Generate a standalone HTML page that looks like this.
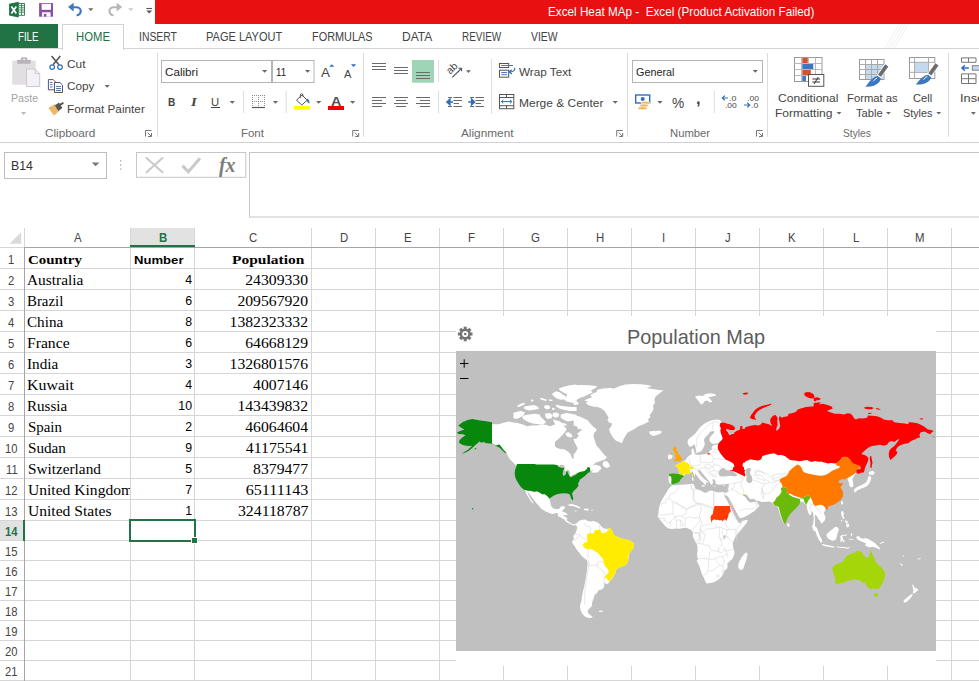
<!DOCTYPE html>
<html>
<head>
<meta charset="utf-8">
<title>Excel Heat MAp</title>
<style>
html,body{margin:0;padding:0;}
body{width:979px;height:681px;overflow:hidden;background:#fff;position:relative;font-family:"Liberation Sans",sans-serif;color:#444;}
.abs{position:absolute;}
.t{position:absolute;white-space:nowrap;line-height:1;}
.vline{position:absolute;width:1px;background:#d6d6d6;}
.hline{position:absolute;height:1px;background:#d6d6d6;}
</style>
</head>
<body>
<div class="abs" style="left:155px;top:0;width:824px;height:24px;background:#e81010;"></div>
<div class="t" style="left:547.50px;top:7.13px;font-size:11.9px;color:#fff;transform:scaleX(0.9852);transform-origin:left top;">Excel Heat MAp -  Excel (Product Activation Failed)</div>
<div class="abs" style="left:0;top:24px;width:58px;height:24.5px;background:#217346;"></div>
<div class="abs" style="left:0;top:48px;width:979px;height:1px;background:#d4d4d4;"></div>
<div class="abs" style="left:62px;top:24px;width:60px;height:25px;background:#fff;border:1px solid #d2d2d2;border-bottom:none;"></div>
<div class="t" style="left:18.40px;top:31.37px;font-size:12.2px;color:#fff;transform:scaleX(0.7957);transform-origin:left top;">FILE</div>
<div class="t" style="left:75.70px;top:31.37px;font-size:12.2px;color:#217346;transform:scaleX(0.9289);transform-origin:left top;">HOME</div>
<div class="t" style="left:138.80px;top:31.37px;font-size:12.2px;color:#444;transform:scaleX(0.8536);transform-origin:left top;">INSERT</div>
<div class="t" style="left:206.00px;top:31.37px;font-size:12.2px;color:#444;transform:scaleX(0.9052);transform-origin:left top;">PAGE LAYOUT</div>
<div class="t" style="left:312.30px;top:31.37px;font-size:12.2px;color:#444;transform:scaleX(0.8940);transform-origin:left top;">FORMULAS</div>
<div class="t" style="left:402.40px;top:31.37px;font-size:12.2px;color:#444;transform:scaleX(0.9861);transform-origin:left top;">DATA</div>
<div class="t" style="left:462.40px;top:31.37px;font-size:12.2px;color:#444;transform:scaleX(0.8166);transform-origin:left top;">REVIEW</div>
<div class="t" style="left:531.40px;top:31.37px;font-size:12.2px;color:#444;transform:scaleX(0.8531);transform-origin:left top;">VIEW</div>
<svg class="abs" style="left:880px;top:24px" width="30" height="24" viewBox="880 24 30 24"><path d="M899.500 24 L885.500 48 M902.500 24 L888.500 48 M905.500 24 L891.500 48 M908.500 24 L894.500 48" stroke="#ececec" stroke-width="0.800" fill="none"/></svg>
<div class="abs" style="left:0;top:141.5px;width:979px;height:1px;background:#d0d0d0;"></div>
<svg class="abs" style="left:0;top:0" width="979" height="145" viewBox="0 0 979 145">
<path d="M18 3.5 H24.5 V15.300 H18 Z" fill="#fff" stroke="#217346" stroke-width="0.9"/>
<path d="M19 5.600h5M19 7.800h5M19 10h5M19 12.200h5M21.600 4v11" stroke="#217346" stroke-width="0.8" fill="none"/>
<path d="M9.100 3.700 L18.700 1.800 L18.700 17.600 L9.100 15.500 Z" fill="#217346"/>
<path d="M11.400 6.500 L16.300 13.500 M16.300 6.500 L11.400 13.500" stroke="#fff" stroke-width="1.700" fill="none"/>
<rect x="39.100" y="3.100" width="13.900" height="13.600" fill="#8b4fa8"/>
<rect x="41.600" y="3.900" width="9.400" height="5.900" fill="#fff"/>
<rect x="42" y="12.300" width="8.600" height="4.400" fill="#fff"/>
<rect x="43.800" y="13.800" width="2.600" height="2.900" fill="#8b4fa8"/>
<path d="M72.500 7.200 H76.300 A4.300 4 0 0 1 76.600 15.200" fill="none" stroke="#3b78c0" stroke-width="2.100"/>
<path d="M68 7.100 L73.600 2.700 L73.600 11.400 Z" fill="#3b78c0"/>
<path d="M88.2 8.2 h5.2 l-2.6 2.7 z" fill="#666"/>
<path d="M117.700 7.200 H113.900 A4.300 4 0 0 0 113.600 15.200" fill="none" stroke="#b7b7b7" stroke-width="2.100"/>
<path d="M122.200 7.100 L116.600 2.700 L116.600 11.400 Z" fill="#b7b7b7"/>
<path d="M128.2 8.2 h5.2 l-2.6 2.7 z" fill="#c9c9c9"/>
<path d="M146.400 8.500h5.700" stroke="#555" stroke-width="1.100"/>
<path d="M146.3 10.6 h5.9 l-2.95 3 z" fill="#555"/>
<rect x="12.200" y="60.500" width="23.500" height="24.300" rx="1.200" fill="#e2dfe2"/>
<rect x="17.200" y="59.800" width="13.500" height="4" rx="0.800" fill="#b7b4b7"/>
<path d="M21 60 v-1.400 a1.400 1.400 0 0 1 1.400 -1.400 h3.400 a1.400 1.400 0 0 1 1.400 1.400 v1.400 z" fill="#b7b4b7"/>
<circle cx="24.100" cy="59.300" r="0.900" fill="#fff"/>
<path d="M26.500 69 h8.700 l4.500 4.500 v13 h-13.200 z" fill="#f4f1f6" stroke="#c8c5cb" stroke-width="0.900"/>
<path d="M35.200 69 v4.500 h4.500" fill="none" stroke="#c8c5cb" stroke-width="0.900"/>
<path d="M21.1 112 h5 l-2.5 3 z" fill="#b9b9b9"/>
<path d="M51.600 56 L58.900 64.700 M60.300 56 L53 64.700" stroke="#555" stroke-width="1.600" fill="none"/>
<circle cx="52.200" cy="67.100" r="2.300" stroke="#2e6fbd" stroke-width="1.200" fill="none"/><circle cx="60" cy="67.100" r="2.300" stroke="#2e6fbd" stroke-width="1.200" fill="none"/>
<path d="M48.400 79.600 h4.800 l2.200 2.200 v8 h-7 z" fill="#fff" stroke="#555" stroke-width="1"/>
<path d="M50 82.500h2.600M50 84.700h2.600M50 87h2.600" stroke="#2e6fbd" stroke-width="0.900"/>
<path d="M54.500 82.500 h5.400 l2.600 2.600 v7.400 h-8 z" fill="#fff" stroke="#555" stroke-width="1"/>
<path d="M56 86.500h5M56 88.500h5M56 90.500h5" stroke="#2e6fbd" stroke-width="0.900"/>
<path d="M104.6 85 h5.2 l-2.6 2.7 z" fill="#666"/>
<path d="M48.400 107.900 L54.900 103.900 L59.400 110.900 L53.900 115.400 Z" fill="#e8b96a"/>
<path d="M54.900 105.400 L58.900 102.400 L62.400 107.900 L58.400 110.900 Z" fill="#555"/>
<path d="M59.400 103.900 L62.900 101.900 L63.900 103.400 L60.700 105.700 Z" fill="#555"/>
<path d="M145.5 136.5 v-6 h6" fill="none" stroke="#777" stroke-width="1"/><path d="M147.6 132.6 l3.400 3.400 M151.5 133 v3.500 h-3.500" fill="none" stroke="#777" stroke-width="1"/>
<path d="M352.7 136.5 v-6 h6" fill="none" stroke="#777" stroke-width="1"/><path d="M354.8 132.6 l3.400 3.400 M358.7 133 v3.500 h-3.500" fill="none" stroke="#777" stroke-width="1"/>
<path d="M616.7 136.5 v-6 h6" fill="none" stroke="#777" stroke-width="1"/><path d="M618.8000000000001 132.6 l3.400 3.400 M622.7 133 v3.500 h-3.500" fill="none" stroke="#777" stroke-width="1"/>
<path d="M756.5 136.5 v-6 h6" fill="none" stroke="#777" stroke-width="1"/><path d="M758.6 132.6 l3.400 3.400 M762.5 133 v3.500 h-3.500" fill="none" stroke="#777" stroke-width="1"/>
<rect x="161.500" y="60.500" width="110" height="22" fill="#fff" stroke="#b4b4b4"/>
<rect x="272.500" y="60.500" width="41.500" height="22" fill="#fff" stroke="#b4b4b4"/>
<path d="M262 70 h5.2 l-2.6 2.7 z" fill="#666"/>
<path d="M305 70 h5.2 l-2.6 2.7 z" fill="#666"/>
<path d="M329.300 66.800 l2.450 -2.600 l2.450 2.600 z" fill="#2e6fbd"/>
<path d="M350.900 64.300 l2.600 2.600 l2.600 -2.600 z" fill="#2e6fbd"/>
<path d="M229.7 101 h5.2 l-2.6 2.7 z" fill="#666"/>
<path d="M243.600 91 v22 M286.200 91 v22" stroke="#dcdcdc"/>
<g fill="#8c8c8c"><rect x="252" y="95" width="1" height="1"/><rect x="254" y="95" width="1" height="1"/><rect x="256" y="95" width="1" height="1"/><rect x="258" y="95" width="1" height="1"/><rect x="260" y="95" width="1" height="1"/><rect x="262" y="95" width="1" height="1"/><rect x="264" y="95" width="1" height="1"/><rect x="252" y="101" width="1" height="1"/><rect x="254" y="101" width="1" height="1"/><rect x="256" y="101" width="1" height="1"/><rect x="258" y="101" width="1" height="1"/><rect x="260" y="101" width="1" height="1"/><rect x="262" y="101" width="1" height="1"/><rect x="264" y="101" width="1" height="1"/><rect x="252" y="95" width="1" height="1"/><rect x="252" y="97" width="1" height="1"/><rect x="252" y="99" width="1" height="1"/><rect x="252" y="101" width="1" height="1"/><rect x="252" y="103" width="1" height="1"/><rect x="252" y="105" width="1" height="1"/><rect x="258" y="95" width="1" height="1"/><rect x="258" y="97" width="1" height="1"/><rect x="258" y="99" width="1" height="1"/><rect x="258" y="101" width="1" height="1"/><rect x="258" y="103" width="1" height="1"/><rect x="258" y="105" width="1" height="1"/><rect x="264" y="95" width="1" height="1"/><rect x="264" y="97" width="1" height="1"/><rect x="264" y="99" width="1" height="1"/><rect x="264" y="101" width="1" height="1"/><rect x="264" y="103" width="1" height="1"/><rect x="264" y="105" width="1" height="1"/></g>
<path d="M252 107.500 h13" stroke="#555" stroke-width="1.200"/>
<path d="M272.9 101 h5.2 l-2.6 2.7 z" fill="#666"/>
<rect x="293.900" y="106" width="16.100" height="3.700" fill="#ffff00"/>
<path d="M296.500 100.200 L302 95 L307.200 100.200 L301.800 105 Z" fill="#fff" stroke="#555" stroke-width="1"/>
<path d="M300.300 98 v-3 a1.300 1.300 0 0 1 2.600 0 v1.600" fill="none" stroke="#555" stroke-width="0.900"/>
<path d="M307 98.500 q3 1.500 2.300 5.300 q-2.300 -1.300 -2.800 -4 z" fill="#2e6fbd"/>
<path d="M316.1 101 h5.2 l-2.6 2.7 z" fill="#666"/>
<rect x="328" y="106" width="16" height="4" fill="#f00000"/>
<path d="M350 101 h5.2 l-2.6 2.7 z" fill="#666"/>
<path d="M372 63.500 h14 M372 66.500 h14 M372 69.500 h14" stroke="#6a6a6a"/>
<path d="M394 67.500 h14 M394 70.500 h14 M394 73.500 h14" stroke="#6a6a6a"/>
<rect x="412" y="60" width="22" height="22.700" fill="#9fd5b7"/>
<path d="M416 72.500 h14 M416 75.500 h14 M416 78.500 h14" stroke="#6a6a6a"/>
<path d="M438.600 60 v22 M438.600 91 v22 M491.600 59 v54.700" stroke="#dcdcdc"/>
<path d="M452.300 77.300 L461.400 68.500 M461.600 68.300 h-3 M461.600 68.300 v3" stroke="#555" stroke-width="1.100" fill="none"/>
<g transform="translate(451.700 69) rotate(-45)"><text x="-5.200" y="3" font-family="Liberation Sans" font-size="10.300" fill="#444">ab</text></g>
<path d="M466 70.2 h4.9 l-2.45 2.7 z" fill="#666"/>
<rect x="499.500" y="63.500" width="9.200" height="4" fill="#fff" stroke="#555"/>
<rect x="499.500" y="70.200" width="9.200" height="7" fill="#fff" stroke="#555"/>
<path d="M501.200 65.500 h11.800 M501.200 72.500 h5.800 M501.200 74.700 h5.800" stroke="#2e6fbd" stroke-width="0.900" fill="none"/>
<path d="M514.800 67.700 q0.400 4.200 -5.400 4.300 M511.700 69.800 l-2.700 2.200 l2.900 2" stroke="#2e6fbd" stroke-width="1.100" fill="none"/>
<path d="M372 97.500 h14 M372 100.500 h10 M372 103.500 h14 M372 106.500 h10" stroke="#6a6a6a"/>
<path d="M394 97.500 h14 M396 100.500 h10 M394 103.500 h14 M396 106.500 h10" stroke="#6a6a6a"/>
<path d="M416 97.500 h14 M420 100.500 h10 M416 103.500 h14 M420 106.500 h10" stroke="#6a6a6a"/>
<path d="M448 97.500 h4 M453.500 97.500 h8.500 M453.500 100.500 h8.500 M453.500 103.500 h5.500 M448 106.500 h4 M453.500 106.500 h8.500" stroke="#6a6a6a"/>
<path d="M447 102 h6 M450 99 l-3.200 3 l3.200 3 z" stroke="#2e6fbd" stroke-width="1.300" fill="#2e6fbd"/>
<path d="M470 97.500 h4 M475.500 97.500 h8.500 M475.500 100.500 h8.500 M475.500 103.500 h5.500 M470 106.500 h4 M475.500 106.500 h8.500" stroke="#6a6a6a"/>
<path d="M468.200 102 h5.500 M471.500 99 l3.200 3 l-3.200 3 z" stroke="#2e6fbd" stroke-width="1.300" fill="#2e6fbd"/>
<rect x="499.500" y="94.500" width="14.300" height="14.200" fill="#fff" stroke="#555"/>
<path d="M499.500 97.500 h14.300 M499.500 105.700 h14.300 M506.500 94.500 v3 M506.500 105.700 v3" stroke="#555"/>
<path d="M501.500 101.600 h10.300 M503.300 99.900 l-1.900 1.700 l1.900 1.700 M510 99.900 l1.900 1.700 l-1.900 1.700" stroke="#2e6fbd" stroke-width="1" fill="none"/>
<path d="M612.6 101 h5.2 l-2.6 2.7 z" fill="#666"/>
<rect x="632.500" y="60.500" width="130" height="22" fill="#fff" stroke="#b4b4b4"/>
<path d="M752.7 70 h5.2 l-2.6 2.7 z" fill="#666"/>
<rect x="635.700" y="95" width="14" height="8" fill="#fff" stroke="#2e6fbd" stroke-width="1.400"/>
<circle cx="642.700" cy="99" r="2" fill="#2e6fbd"/>
<ellipse cx="645.500" cy="102.800" rx="4.600" ry="1.600" fill="#eab765" stroke="#fff" stroke-width="0.600"/>
<ellipse cx="644" cy="105.500" rx="4.600" ry="1.600" fill="#eab765" stroke="#fff" stroke-width="0.600"/>
<ellipse cx="642.500" cy="108.200" rx="4.600" ry="1.600" fill="#eab765" stroke="#fff" stroke-width="0.600"/>
<path d="M657.3 101 h5.2 l-2.6 2.7 z" fill="#666"/>
<path d="M714.300 91 v22" stroke="#dcdcdc"/>
<path d="M722.300 98 h5.700 M724.800 95.600 l-2.500 2.400 l2.500 2.400" stroke="#2e6fbd" stroke-width="1.200" fill="none"/>
<path d="M744 105 h5.700 M747.200 102.600 l2.500 2.400 l-2.500 2.400" stroke="#2e6fbd" stroke-width="1.200" fill="none"/>
<rect x="794.500" y="57.500" width="27.500" height="24" fill="#fff" stroke="#9a9a9a"/>
<path d="M794.500 63.500 h27.500 M794.500 69.500 h27.500 M794.500 75.500 h27.500 M801.500 57.500 v24 M808.500 57.500 v24 M815.500 57.500 v24" stroke="#b9b9b9" fill="none"/>
<rect x="802.300" y="58" width="5.500" height="5" fill="#d9502f"/><rect x="802.300" y="64" width="11" height="5" fill="#3b78c0"/><rect x="802.300" y="70" width="8.500" height="5" fill="#d9502f"/><rect x="802.300" y="76" width="3.700" height="5" fill="#3b78c0"/>
<rect x="808.500" y="74.500" width="15.300" height="11.800" fill="#fff" stroke="#555"/>
<path d="M812.500 79 h7.500 M812.500 82 h7.500 M818.300 77 l-4.200 7" stroke="#333" stroke-width="1" fill="none"/>
<path d="M836.6 112 h4.9 l-2.45 2.6 z" fill="#666"/>
<rect x="859.500" y="59.500" width="24.500" height="20" fill="#fff" stroke="#9a9a9a"/>
<rect x="866" y="65" width="17.500" height="14" fill="#c5d9ee"/>
<path d="M859.500 64.500 h24.500 M859.500 69.500 h24.500 M859.500 74.500 h24.500 M865.500 59.500 v20 M871.500 59.500 v20 M877.500 59.500 v20" stroke="#a9a9a9" fill="none"/>
<path d="M886.800 65.300 L879 76.400" stroke="#fff" stroke-width="5.200" fill="none"/>
<path d="M886.800 65.300 L879.300 76" stroke="#6d6d6d" stroke-width="3.800" fill="none"/>
<path d="M876.800 74.300 l4.600 3.300" stroke="#fff" stroke-width="0.900" fill="none"/>
<path d="M877.300 76.100 q-5.500 1.200 -11.800 10.700 q9 0.300 13.500 -4.500 q2 -2.500 1.800 -4 z" fill="#3b78c0"/>
<path d="M873.300 81.300 q1.500 -2.600 3.800 -3.200" stroke="#fff" stroke-width="0.900" fill="none"/>
<path d="M886 112 h4.9 l-2.45 2.6 z" fill="#666"/>
<rect x="909.500" y="57.500" width="25.300" height="21" fill="#fff" stroke="#9a9a9a"/>
<path d="M909.500 62.300 h25.300 M909.500 72.300 h25.300 M914.600 57.500 v21 M928.500 57.500 v21" stroke="#a9a9a9" fill="none"/>
<rect x="914.600" y="62.300" width="13.900" height="10" fill="#c5d9ee" stroke="#a9a9a9" stroke-width="0.600"/>
<path d="M937 64.300 L929.300 75" stroke="#fff" stroke-width="5.200" fill="none"/>
<path d="M937 64.300 L929.600 74.600" stroke="#6d6d6d" stroke-width="3.800" fill="none"/>
<path d="M927 72.900 l4.600 3.300" stroke="#fff" stroke-width="0.900" fill="none"/>
<path d="M927.600 74.700 q-5.500 1.200 -11.800 9.900 q9 0.300 13.500 -3.900 q2 -2.500 1.800 -3.800 z" fill="#3b78c0"/>
<path d="M923.600 79.700 q1.500 -2.600 3.800 -3.200" stroke="#fff" stroke-width="0.900" fill="none"/>
<path d="M936.3 112 h4.9 l-2.45 2.6 z" fill="#666"/>
<path d="M961.500 57.900 h14.500 v4.400 h-14.500 z M968.500 57.900 v4.400" fill="#fff" stroke="#777"/>
<path d="M961.500 73.900 h14.500 v9.600 h-14.500 z M968.500 73.900 v9.600 M961.500 78.700 h14.500" fill="#fff" stroke="#777"/>
<rect x="972.300" y="65.700" width="8" height="4.500" fill="#c5d9ee" stroke="#777" stroke-width="0.900"/>
<path d="M962 68 h6.800 M964.800 65.300 l-2.800 2.700 l2.800 2.700" stroke="#2e6fbd" stroke-width="1.500" fill="none"/>
<path d="M970.9 112 h4.9 l-2.45 2.8 z" fill="#666"/>
</svg>
<div class="abs" style="left:156.5px;top:53px;height:84px;width:1px;background:#dcdcdc;"></div>
<div class="abs" style="left:363.0px;top:53px;height:84px;width:1px;background:#dcdcdc;"></div>
<div class="abs" style="left:627.0px;top:53px;height:84px;width:1px;background:#dcdcdc;"></div>
<div class="abs" style="left:767.0px;top:53px;height:84px;width:1px;background:#dcdcdc;"></div>
<div class="abs" style="left:947.8px;top:53px;height:84px;width:1px;background:#dcdcdc;"></div>
<div class="t" style="left:10.80px;top:92.57px;font-size:11.5px;color:#a3a3a3;transform:scaleX(0.9249);transform-origin:left top;">Paste</div>
<div class="t" style="left:67.30px;top:58.67px;font-size:11.5px;color:#444;transform:scaleX(1.0338);transform-origin:left top;">Cut</div>
<div class="t" style="left:67.30px;top:81.47px;font-size:11.5px;color:#444;transform:scaleX(1.0243);transform-origin:left top;">Copy</div>
<div class="t" style="left:67.30px;top:104.37px;font-size:11.5px;color:#444;transform:scaleX(1.0229);transform-origin:left top;">Format Painter</div>
<div class="t" style="left:44.50px;top:127.57px;font-size:11.5px;color:#6a6a6a;transform:scaleX(1.0218);transform-origin:left top;">Clipboard</div>
<div class="t" style="left:164.80px;top:66.77px;font-size:11.5px;color:#1e1e1e;transform:scaleX(1.0125);transform-origin:left top;">Calibri</div>
<div class="t" style="left:275.60px;top:66.77px;font-size:11.5px;color:#1e1e1e;transform:scaleX(0.8460);transform-origin:left top;">11</div>
<div class="t" style="left:321.40px;top:66.10px;font-size:13.7px;color:#444;transform:scaleX(0.9849);transform-origin:left top;">A</div>
<div class="t" style="left:344.30px;top:68.56px;font-size:10.8px;color:#444;transform:scaleX(1.0272);transform-origin:left top;">A</div>
<div class="t" style="left:167.70px;top:96.48px;font-size:11.6px;color:#444;font-weight:bold;transform:scaleX(0.8714);transform-origin:left top;">B</div>
<div class="t" style="left:190.50px;top:95.91px;font-size:12.4px;color:#444;font-family:'Liberation Serif',serif;font-weight:bold;font-style:italic;transform:scaleX(1.1813);transform-origin:left top;">I</div>
<div class="t" style="left:211.40px;top:96.48px;font-size:11.6px;color:#444;transform:scaleX(0.9669);transform-origin:left top;">U</div>
<div class="abs" style="left:211px;top:107px;width:9px;height:1px;background:#444;"></div>
<div class="t" style="left:331.20px;top:94.89px;font-size:13.6px;color:#505050;font-weight:bold;transform:scaleX(1.0589);transform-origin:left top;">A</div>
<div class="t" style="left:240.80px;top:127.57px;font-size:11.5px;color:#6a6a6a;transform:scaleX(0.9951);transform-origin:left top;">Font</div>
<div class="t" style="left:518.60px;top:66.77px;font-size:11.5px;color:#444;transform:scaleX(1.0186);transform-origin:left top;">Wrap Text</div>
<div class="t" style="left:518.60px;top:97.87px;font-size:11.5px;color:#444;transform:scaleX(1.0409);transform-origin:left top;">Merge &amp; Center</div>
<div class="t" style="left:461.20px;top:127.57px;font-size:11.5px;color:#6a6a6a;transform:scaleX(1.0266);transform-origin:left top;">Alignment</div>
<div class="t" style="left:635.90px;top:66.77px;font-size:11.5px;color:#1e1e1e;transform:scaleX(0.9386);transform-origin:left top;">General</div>
<div class="t" style="left:671.50px;top:96.05px;font-size:14px;color:#444;transform:scaleX(0.9801);transform-origin:left top;">%</div>
<div class="t" style="left:696.00px;top:89.91px;font-size:17px;color:#444;font-weight:bold;transform:scaleX(0.9740);transform-origin:left top;">,</div>
<div class="t" style="left:729.00px;top:95.27px;font-size:7.6px;color:#444;transform:scaleX(1.1675);transform-origin:left top;">.0</div>
<div class="t" style="left:724.60px;top:102.07px;font-size:7.6px;color:#444;transform:scaleX(1.1169);transform-origin:left top;">.00</div>
<div class="t" style="left:746.70px;top:95.27px;font-size:7.6px;color:#444;transform:scaleX(1.1263);transform-origin:left top;">.00</div>
<div class="t" style="left:751.40px;top:102.07px;font-size:7.6px;color:#444;transform:scaleX(1.1360);transform-origin:left top;">.0</div>
<div class="t" style="left:669.80px;top:127.57px;font-size:11.5px;color:#6a6a6a;transform:scaleX(0.9804);transform-origin:left top;">Number</div>
<div class="t" style="left:777.70px;top:92.97px;font-size:11.5px;color:#444;transform:scaleX(1.0514);transform-origin:left top;">Conditional</div>
<div class="t" style="left:774.80px;top:108.47px;font-size:11.5px;color:#444;transform:scaleX(1.0461);transform-origin:left top;">Formatting</div>
<div class="t" style="left:846.70px;top:92.97px;font-size:11.5px;color:#444;transform:scaleX(0.9795);transform-origin:left top;">Format as</div>
<div class="t" style="left:855.70px;top:108.47px;font-size:11.5px;color:#444;transform:scaleX(0.9675);transform-origin:left top;">Table</div>
<div class="t" style="left:912.50px;top:92.97px;font-size:11.5px;color:#444;transform:scaleX(0.9691);transform-origin:left top;">Cell</div>
<div class="t" style="left:903.40px;top:108.47px;font-size:11.5px;color:#444;transform:scaleX(0.9356);transform-origin:left top;">Styles</div>
<div class="t" style="left:843.40px;top:127.57px;font-size:11.5px;color:#6a6a6a;transform:scaleX(0.8877);transform-origin:left top;">Styles</div>
<div class="t" style="left:959.60px;top:92.97px;font-size:11.5px;color:#444;transform:scaleX(1.1091);transform-origin:left top;">Insert</div>
<div class="abs" style="left:4px;top:152px;width:101px;height:24.5px;border:1px solid #bdbdbd;background:#fff;"></div>
<div class="t" style="left:11.40px;top:160.24px;font-size:12px;color:#333;transform:scaleX(1.0210);transform-origin:left top;">B14</div>
<svg class="abs" style="left:0;top:145px" width="979" height="80" viewBox="0 145 979 80">
<path d="M91.800 162.500 h7.600 l-3.800 3.800 z" fill="#777"/>
<rect x="120" y="160.200" width="1.300" height="1.300" fill="#a5a5a5"/><rect x="120" y="164.300" width="1.300" height="1.300" fill="#a5a5a5"/><rect x="120" y="168.400" width="1.300" height="1.300" fill="#a5a5a5"/>
<rect x="136.500" y="152.500" width="109.300" height="24.800" fill="#fff" stroke="#c6c6c6"/>
<path d="M146.500 158 L162.500 172.300 M162.500 158 L146.500 172.300" stroke="#c9c9c9" stroke-width="2" fill="none" stroke-linecap="round"/>
<path d="M182.500 165.600 L188.400 171.800 L200 158.300" stroke="#c9c9c9" stroke-width="3" fill="none"/>
<path d="M249.500 217.300 v-64.800 h730 M249.500 217 h730" stroke="#c6c6c6" fill="none"/>
</svg>
<div class="t" style="left:218.50px;top:154.71px;font-size:21px;color:#7c7c7c;font-family:'Liberation Serif',serif;font-weight:bold;font-style:italic;transform:scaleX(0.9432);transform-origin:left top;">fx</div>
<div class="abs" style="left:131px;top:228px;width:63px;height:18px;background:#e2e2e2;"></div>
<div class="abs" style="left:130px;top:245px;width:65px;height:2px;background:#217346;"></div>
<svg class="abs" style="left:0;top:228px" width="24" height="20"><path d="M21.2 4.2 v11.500 h-11.700 z" fill="#dadada"/></svg>
<div class="hline" style="left:0;top:268px;width:979px;"></div>
<div class="hline" style="left:0;top:289px;width:979px;"></div>
<div class="hline" style="left:0;top:310px;width:979px;"></div>
<div class="hline" style="left:0;top:331px;width:979px;"></div>
<div class="hline" style="left:0;top:352px;width:979px;"></div>
<div class="hline" style="left:0;top:373px;width:979px;"></div>
<div class="hline" style="left:0;top:394px;width:979px;"></div>
<div class="hline" style="left:0;top:415px;width:979px;"></div>
<div class="hline" style="left:0;top:436px;width:979px;"></div>
<div class="hline" style="left:0;top:457px;width:979px;"></div>
<div class="hline" style="left:0;top:478px;width:979px;"></div>
<div class="hline" style="left:0;top:499px;width:979px;"></div>
<div class="hline" style="left:0;top:520px;width:979px;"></div>
<div class="hline" style="left:0;top:540px;width:979px;"></div>
<div class="hline" style="left:0;top:560px;width:979px;"></div>
<div class="hline" style="left:0;top:580px;width:979px;"></div>
<div class="hline" style="left:0;top:600px;width:979px;"></div>
<div class="hline" style="left:0;top:620px;width:979px;"></div>
<div class="hline" style="left:0;top:640px;width:979px;"></div>
<div class="hline" style="left:0;top:660px;width:979px;"></div>
<div class="hline" style="left:0;top:680px;width:979px;"></div>
<div class="vline" style="left:24px;top:228px;height:453px;"></div>
<div class="vline" style="left:130px;top:228px;height:453px;"></div>
<div class="vline" style="left:194px;top:228px;height:453px;"></div>
<div class="vline" style="left:311px;top:228px;height:453px;"></div>
<div class="vline" style="left:375px;top:228px;height:453px;"></div>
<div class="vline" style="left:439px;top:228px;height:453px;"></div>
<div class="vline" style="left:503px;top:228px;height:453px;"></div>
<div class="vline" style="left:567px;top:228px;height:453px;"></div>
<div class="vline" style="left:631px;top:228px;height:453px;"></div>
<div class="vline" style="left:695px;top:228px;height:453px;"></div>
<div class="vline" style="left:759px;top:228px;height:453px;"></div>
<div class="vline" style="left:823px;top:228px;height:453px;"></div>
<div class="vline" style="left:887px;top:228px;height:453px;"></div>
<div class="vline" style="left:951px;top:228px;height:453px;"></div>
<div class="hline" style="left:0;top:247px;width:24px;background:#d6d6d6;"></div>
<div class="hline" style="left:24px;top:247px;width:955px;background:#a6a6a6;"></div>
<div class="vline" style="left:24px;top:247px;height:434px;background:#a6a6a6;"></div>
<div class="abs" style="left:130px;top:245px;width:65px;height:2px;background:#217346;"></div>
<div class="t" style="left:74.00px;top:232.20px;font-size:12.4px;color:#444;transform:scaleX(0.9200);transform-origin:left top;">A</div>
<div class="t" style="left:158.68px;top:232.20px;font-size:12.4px;color:#217346;font-weight:bold;transform:scaleX(0.9200);transform-origin:left top;">B</div>
<div class="t" style="left:249.18px;top:232.20px;font-size:12.4px;color:#444;transform:scaleX(0.9200);transform-origin:left top;">C</div>
<div class="t" style="left:339.68px;top:232.20px;font-size:12.4px;color:#444;transform:scaleX(0.9200);transform-origin:left top;">D</div>
<div class="t" style="left:404.00px;top:232.20px;font-size:12.4px;color:#444;transform:scaleX(0.9200);transform-origin:left top;">E</div>
<div class="t" style="left:468.32px;top:232.20px;font-size:12.4px;color:#444;transform:scaleX(0.9200);transform-origin:left top;">F</div>
<div class="t" style="left:531.36px;top:232.20px;font-size:12.4px;color:#444;transform:scaleX(0.9200);transform-origin:left top;">G</div>
<div class="t" style="left:595.68px;top:232.20px;font-size:12.4px;color:#444;transform:scaleX(0.9200);transform-origin:left top;">H</div>
<div class="t" style="left:662.22px;top:232.20px;font-size:12.4px;color:#444;transform:scaleX(0.9200);transform-origin:left top;">I</div>
<div class="t" style="left:724.95px;top:232.20px;font-size:12.4px;color:#444;transform:scaleX(0.9200);transform-origin:left top;">J</div>
<div class="t" style="left:788.00px;top:232.20px;font-size:12.4px;color:#444;transform:scaleX(0.9200);transform-origin:left top;">K</div>
<div class="t" style="left:852.63px;top:232.20px;font-size:12.4px;color:#444;transform:scaleX(0.9200);transform-origin:left top;">L</div>
<div class="t" style="left:915.05px;top:232.20px;font-size:12.4px;color:#444;transform:scaleX(0.9200);transform-origin:left top;">M</div>
<div class="t" style="left:979.68px;top:232.20px;font-size:12.4px;color:#444;transform:scaleX(0.9200);transform-origin:left top;">N</div>
<div class="t" style="left:8.48px;top:253.67px;font-size:12.2px;color:#444;transform:scaleX(0.9200);transform-origin:left top;">1</div>
<div class="t" style="left:8.48px;top:274.67px;font-size:12.2px;color:#444;transform:scaleX(0.9200);transform-origin:left top;">2</div>
<div class="t" style="left:8.48px;top:295.67px;font-size:12.2px;color:#444;transform:scaleX(0.9200);transform-origin:left top;">3</div>
<div class="t" style="left:8.48px;top:316.67px;font-size:12.2px;color:#444;transform:scaleX(0.9200);transform-origin:left top;">4</div>
<div class="t" style="left:8.48px;top:337.67px;font-size:12.2px;color:#444;transform:scaleX(0.9200);transform-origin:left top;">5</div>
<div class="t" style="left:8.48px;top:358.67px;font-size:12.2px;color:#444;transform:scaleX(0.9200);transform-origin:left top;">6</div>
<div class="t" style="left:8.48px;top:379.67px;font-size:12.2px;color:#444;transform:scaleX(0.9200);transform-origin:left top;">7</div>
<div class="t" style="left:8.48px;top:400.67px;font-size:12.2px;color:#444;transform:scaleX(0.9200);transform-origin:left top;">8</div>
<div class="t" style="left:8.48px;top:421.67px;font-size:12.2px;color:#444;transform:scaleX(0.9200);transform-origin:left top;">9</div>
<div class="t" style="left:5.36px;top:442.67px;font-size:12.2px;color:#444;transform:scaleX(0.9200);transform-origin:left top;">10</div>
<div class="t" style="left:5.77px;top:463.67px;font-size:12.2px;color:#444;transform:scaleX(0.9200);transform-origin:left top;">11</div>
<div class="t" style="left:5.36px;top:484.67px;font-size:12.2px;color:#444;transform:scaleX(0.9200);transform-origin:left top;">12</div>
<div class="t" style="left:5.36px;top:505.67px;font-size:12.2px;color:#444;transform:scaleX(0.9200);transform-origin:left top;">13</div>
<div class="abs" style="left:0;top:521px;width:23px;height:19px;background:#e2e2e2;"></div>
<div class="abs" style="left:23px;top:520px;width:2px;height:21px;background:#217346;"></div>
<div class="t" style="left:5.36px;top:525.57px;font-size:12.2px;color:#217346;font-weight:bold;transform:scaleX(0.9200);transform-origin:left top;">14</div>
<div class="t" style="left:5.36px;top:545.57px;font-size:12.2px;color:#444;transform:scaleX(0.9200);transform-origin:left top;">15</div>
<div class="t" style="left:5.36px;top:565.57px;font-size:12.2px;color:#444;transform:scaleX(0.9200);transform-origin:left top;">16</div>
<div class="t" style="left:5.36px;top:585.57px;font-size:12.2px;color:#444;transform:scaleX(0.9200);transform-origin:left top;">17</div>
<div class="t" style="left:5.36px;top:605.57px;font-size:12.2px;color:#444;transform:scaleX(0.9200);transform-origin:left top;">18</div>
<div class="t" style="left:5.36px;top:625.57px;font-size:12.2px;color:#444;transform:scaleX(0.9200);transform-origin:left top;">19</div>
<div class="t" style="left:5.36px;top:645.57px;font-size:12.2px;color:#444;transform:scaleX(0.9200);transform-origin:left top;">20</div>
<div class="t" style="left:5.36px;top:665.57px;font-size:12.2px;color:#444;transform:scaleX(0.9200);transform-origin:left top;">21</div>
<div class="t" style="left:27.80px;top:253.08px;font-size:13.4px;color:#000;font-family:'Liberation Serif',serif;font-weight:bold;transform:scaleX(1.1138);transform-origin:left top;">Country</div>
<div class="t" style="left:133.70px;top:254.28px;font-size:11.6px;color:#000;font-weight:bold;transform:scaleX(1.1294);transform-origin:left top;">Number</div>
<div class="t" style="left:232.10px;top:253.08px;font-size:13.4px;color:#000;font-family:'Liberation Serif',serif;font-weight:bold;transform:scaleX(1.1574);transform-origin:left top;">Population</div>
<div class="t" style="left:27.40px;top:273.57px;font-size:14px;color:#000;font-family:'Liberation Serif',serif;transform:scaleX(1.0971);transform-origin:left top;">Australia</div>
<div class="t" style="left:185.19px;top:274.43px;font-size:12.6px;color:#000;transform:scaleX(0.9775);transform-origin:right top;">4</div>
<div class="t" style="left:252.40px;top:273.57px;font-size:14px;color:#000;font-family:'Liberation Serif',serif;transform:scaleX(1.1200);transform-origin:right top;">24309330</div>
<div class="t" style="left:27.40px;top:294.57px;font-size:14px;color:#000;font-family:'Liberation Serif',serif;transform:scaleX(1.0612);transform-origin:left top;">Brazil</div>
<div class="t" style="left:185.19px;top:295.43px;font-size:12.6px;color:#000;transform:scaleX(0.9775);transform-origin:right top;">6</div>
<div class="t" style="left:245.40px;top:294.57px;font-size:14px;color:#000;font-family:'Liberation Serif',serif;transform:scaleX(1.1200);transform-origin:right top;">209567920</div>
<div class="t" style="left:27.40px;top:315.57px;font-size:14px;color:#000;font-family:'Liberation Serif',serif;transform:scaleX(1.0825);transform-origin:left top;">China</div>
<div class="t" style="left:185.19px;top:316.43px;font-size:12.6px;color:#000;transform:scaleX(0.9775);transform-origin:right top;">8</div>
<div class="t" style="left:238.40px;top:315.57px;font-size:14px;color:#000;font-family:'Liberation Serif',serif;transform:scaleX(1.1200);transform-origin:right top;">1382323332</div>
<div class="t" style="left:27.40px;top:336.57px;font-size:14px;color:#000;font-family:'Liberation Serif',serif;transform:scaleX(1.1184);transform-origin:left top;">France</div>
<div class="t" style="left:185.19px;top:337.43px;font-size:12.6px;color:#000;transform:scaleX(0.9775);transform-origin:right top;">6</div>
<div class="t" style="left:252.40px;top:336.57px;font-size:14px;color:#000;font-family:'Liberation Serif',serif;transform:scaleX(1.1200);transform-origin:right top;">64668129</div>
<div class="t" style="left:27.40px;top:357.57px;font-size:14px;color:#000;font-family:'Liberation Serif',serif;transform:scaleX(1.0846);transform-origin:left top;">India</div>
<div class="t" style="left:185.19px;top:358.43px;font-size:12.6px;color:#000;transform:scaleX(0.9775);transform-origin:right top;">3</div>
<div class="t" style="left:238.40px;top:357.57px;font-size:14px;color:#000;font-family:'Liberation Serif',serif;transform:scaleX(1.1200);transform-origin:right top;">1326801576</div>
<div class="t" style="left:27.40px;top:378.57px;font-size:14px;color:#000;font-family:'Liberation Serif',serif;transform:scaleX(1.1355);transform-origin:left top;">Kuwait</div>
<div class="t" style="left:185.19px;top:379.43px;font-size:12.6px;color:#000;transform:scaleX(0.9775);transform-origin:right top;">4</div>
<div class="t" style="left:259.40px;top:378.57px;font-size:14px;color:#000;font-family:'Liberation Serif',serif;transform:scaleX(1.1200);transform-origin:right top;">4007146</div>
<div class="t" style="left:27.40px;top:399.57px;font-size:14px;color:#000;font-family:'Liberation Serif',serif;transform:scaleX(1.0767);transform-origin:left top;">Russia</div>
<div class="t" style="left:178.18px;top:400.43px;font-size:12.6px;color:#000;transform:scaleX(0.9775);transform-origin:right top;">10</div>
<div class="t" style="left:245.40px;top:399.57px;font-size:14px;color:#000;font-family:'Liberation Serif',serif;transform:scaleX(1.1200);transform-origin:right top;">143439832</div>
<div class="t" style="left:27.70px;top:420.57px;font-size:14px;color:#000;font-family:'Liberation Serif',serif;transform:scaleX(1.0630);transform-origin:left top;">Spain</div>
<div class="t" style="left:185.19px;top:421.43px;font-size:12.6px;color:#000;transform:scaleX(0.9775);transform-origin:right top;">2</div>
<div class="t" style="left:252.40px;top:420.57px;font-size:14px;color:#000;font-family:'Liberation Serif',serif;transform:scaleX(1.1200);transform-origin:right top;">46064604</div>
<div class="t" style="left:27.70px;top:441.57px;font-size:14px;color:#000;font-family:'Liberation Serif',serif;transform:scaleX(1.0829);transform-origin:left top;">Sudan</div>
<div class="t" style="left:185.19px;top:442.43px;font-size:12.6px;color:#000;transform:scaleX(0.9775);transform-origin:right top;">9</div>
<div class="t" style="left:252.92px;top:441.57px;font-size:14px;color:#000;font-family:'Liberation Serif',serif;transform:scaleX(1.1305);transform-origin:right top;">41175541</div>
<div class="t" style="left:27.70px;top:462.57px;font-size:14px;color:#000;font-family:'Liberation Serif',serif;transform:scaleX(1.0902);transform-origin:left top;">Switzerland</div>
<div class="t" style="left:185.19px;top:463.43px;font-size:12.6px;color:#000;transform:scaleX(0.9775);transform-origin:right top;">5</div>
<div class="t" style="left:259.40px;top:462.57px;font-size:14px;color:#000;font-family:'Liberation Serif',serif;transform:scaleX(1.1200);transform-origin:right top;">8379477</div>
<div class="abs" style="left:24px;top:479px;width:105.500px;height:20px;overflow:hidden;"><div class="t" style="left:3.70px;top:4.58px;font-size:14px;color:#000;font-family:'Liberation Serif',serif;transform:scaleX(1.1127);transform-origin:left top;">United Kingdom</div></div>
<div class="t" style="left:185.19px;top:484.43px;font-size:12.6px;color:#000;transform:scaleX(0.9775);transform-origin:right top;">7</div>
<div class="t" style="left:253.96px;top:483.57px;font-size:14px;color:#000;font-family:'Liberation Serif',serif;transform:scaleX(1.1521);transform-origin:right top;">65111143</div>
<div class="t" style="left:27.70px;top:504.57px;font-size:14px;color:#000;font-family:'Liberation Serif',serif;transform:scaleX(1.1127);transform-origin:left top;">United States</div>
<div class="t" style="left:185.19px;top:505.43px;font-size:12.6px;color:#000;transform:scaleX(0.9775);transform-origin:right top;">1</div>
<div class="t" style="left:245.92px;top:504.57px;font-size:14px;color:#000;font-family:'Liberation Serif',serif;transform:scaleX(1.1293);transform-origin:right top;">324118787</div>
<div class="abs" style="left:129px;top:519px;width:63px;height:19px;border:2px solid #217346;"></div>
<div class="abs" style="left:191px;top:537px;width:5px;height:5px;background:#217346;border:1px solid #fff;"></div>
<div class="abs" style="left:456px;top:316px;width:480px;height:350px;background:#fff;"></div>
<svg class="abs" style="left:456px;top:316px" width="480" height="350" viewBox="456 316 480 350">
<rect x="456" y="351" width="480" height="300" fill="#c0c0c0"/>
<g transform="translate(465.2 334)"><g fill="#757575"><rect x="-1.5" y="-7.300" width="3" height="3.200" transform="rotate(0)"/><rect x="-1.5" y="-7.300" width="3" height="3.200" transform="rotate(45)"/><rect x="-1.5" y="-7.300" width="3" height="3.200" transform="rotate(90)"/><rect x="-1.5" y="-7.300" width="3" height="3.200" transform="rotate(135)"/><rect x="-1.5" y="-7.300" width="3" height="3.200" transform="rotate(180)"/><rect x="-1.5" y="-7.300" width="3" height="3.200" transform="rotate(225)"/><rect x="-1.5" y="-7.300" width="3" height="3.200" transform="rotate(270)"/><rect x="-1.5" y="-7.300" width="3" height="3.200" transform="rotate(315)"/></g><circle r="4.300" fill="none" stroke="#757575" stroke-width="2.400"/><circle r="1.300" fill="#757575"/></g>
<path d="M460 363.500 h8.400 M464.200 359.300 v8.400 M460 378.500 h8.400" stroke="#000" stroke-width="1" fill="none"/>
<g stroke="none" fill-rule="evenodd">
<path d="M503.2 449.4L506.5 453.3L507.9 456.0L509.8 459.3L513.1 462.6L515.8 465.2L517.1 472.5L580.6 472.5L580.6 459.3L575.0 459.3L572.0 458.6L570.6 455.3L568.7 452.0L564.7 449.4L559.4 448.7L556.1 447.4L554.1 444.8L555.4 441.5L558.7 438.8L562.0 435.5L564.7 432.2L566.7 429.6L565.4 427.6L563.4 425.6L560.7 424.3L557.4 423.6L553.5 424.9L550.2 426.3L546.2 424.9L542.2 424.3L536.9 425.6L531.7 425.6L527.0 426.3L522.4 424.3L517.1 423.0L513.1 422.6L509.2 421.6L505.2 422.3L498.6 424.3L492.0 424.3L492.0 443.2L496.0 445.4L499.3 444.5L501.3 446.7Z" fill="#ffffff"/>
<path d="M523.7 415.0L525.0 412.4L521.1 411.1L517.1 411.7L513.1 413.0L513.8 415.0L513.1 417.7L515.8 419.0L519.8 417.7Z" fill="#ffffff"/>
<path d="M538.3 424.3L543.5 424.3L546.2 422.3L543.5 419.6L540.9 417.0L539.6 414.4L534.3 413.7L529.0 414.4L522.4 415.7L522.4 418.3L525.0 420.3L529.0 422.3L533.0 423.6Z" fill="#ffffff"/>
<path d="M521.1 403.5L517.1 405.8L517.8 407.1L520.4 406.4L524.4 404.4L525.0 402.7Z" fill="#ffffff"/>
<path d="M538.9 409.1L538.3 407.1L534.3 405.1L529.0 405.8L524.4 406.4L523.7 407.8L525.0 409.3L529.7 410.4L534.3 409.7Z" fill="#ffffff"/>
<path d="M531.4 401.8L533.6 401.1L533.0 399.6L531.0 399.8Z" fill="#ffffff"/>
<path d="M543.5 398.5L540.2 397.8L540.2 398.9L542.2 400.1L546.2 400.9L546.9 399.8Z" fill="#ffffff"/>
<path d="M549.5 400.9L552.8 401.1L552.1 399.8L548.8 399.2Z" fill="#ffffff"/>
<path d="M547.5 405.1L544.2 405.8L544.2 407.8L546.2 409.3L549.5 409.1L550.2 406.4Z" fill="#ffffff"/>
<path d="M552.1 409.7L554.1 410.1L554.8 408.4L552.1 407.8Z" fill="#ffffff"/>
<path d="M564.7 399.2L566.0 396.5L562.7 394.5L560.1 392.6L556.1 391.2L552.8 393.2L552.1 394.5L554.1 396.5L556.8 398.5L560.7 399.8Z" fill="#ffffff"/>
<path d="M564.0 399.8L567.3 401.8L571.3 402.5L576.6 403.8L576.6 384.6L570.0 385.3L564.7 386.6L558.7 388.6L560.1 390.6L563.4 392.6L567.3 394.5L566.0 397.2Z" fill="#ffffff"/>
<path d="M576.6 411.1L576.6 407.1L571.3 407.1L566.0 406.4L560.7 405.8L556.1 404.4L556.1 406.4L559.4 408.4L564.7 410.1L570.0 411.1Z" fill="#ffffff"/>
<path d="M550.2 413.0L544.9 413.7L545.5 417.0L547.5 419.0L551.5 418.3L552.8 415.7Z" fill="#ffffff"/>
<path d="M556.8 412.4L552.8 413.0L552.8 415.7L554.8 417.7L558.1 417.0L559.4 414.4Z" fill="#ffffff"/>
<path d="M576.6 419.6L576.6 415.0L571.3 413.7L566.0 413.0L560.7 414.4L560.7 417.7L563.4 419.6L567.3 421.6L571.3 421.0Z" fill="#ffffff"/>
<path d="M562.0 423.0L559.4 421.0L555.4 420.3L552.8 419.0L555.4 424.9L560.7 425.6L567.3 425.6L565.4 423.6Z" fill="#ffffff"/>
<path d="M568.7 432.2L565.4 432.9L566.7 436.2L570.0 437.5L572.6 436.8L571.3 434.2Z" fill="#ffffff"/>
<path d="M588.2 398.5L584.3 400.5L588.2 401.8L585.6 403.1L588.2 405.1L592.8 406.4L597.5 407.1L601.4 408.4L604.7 411.1L606.7 414.4L608.7 417.7L607.4 419.6L608.7 422.3L612.0 423.6L611.3 426.3L609.1 428.9L610.0 432.2L611.3 434.8L613.3 438.1L616.0 440.8L619.3 442.1L621.9 443.2L623.2 440.1L625.2 436.2L627.2 432.9L630.5 430.9L634.5 428.9L638.4 426.3L643.7 424.3L649.0 421.6L647.7 419.6L650.3 417.7L649.7 415.0L651.7 412.4L653.6 409.1L653.0 405.8L655.0 403.1L654.3 399.8L655.6 396.5L659.6 393.2L663.5 390.6L659.6 389.9L654.3 389.3L646.4 387.9L651.7 386.6L649.0 385.3L641.1 384.2L633.1 384.0L625.2 384.6L618.6 386.6L614.6 388.6L609.4 387.9L602.8 388.6L596.8 389.9L596.8 391.9L593.5 393.2L590.2 395.2L592.2 397.2Z" fill="#ffffff"/>
<path d="M653.0 430.9L649.0 431.5L649.7 433.5L651.7 435.5L655.0 436.1L655.0 430.5Z" fill="#ffffff"/>
<path d="M588.2 394.5L592.8 392.6L590.9 390.6L594.8 388.6L597.5 386.3L589.5 385.3L581.6 385.0L573.7 385.3L573.7 401.1L577.0 399.8L580.3 397.8L584.3 396.5Z" fill="#ffffff"/>
<path d="M573.7 403.1L573.7 405.1L576.3 405.1L579.0 403.8L577.6 401.8Z" fill="#ffffff"/>
<path d="M584.3 431.5L586.9 432.9L589.5 435.5L592.2 436.8L594.2 434.2L591.5 430.9L594.8 431.5L596.8 429.6L592.8 426.3L590.2 423.6L587.6 420.3L583.6 418.3L579.0 416.3L573.7 415.0L573.7 425.6L576.3 426.3L579.0 427.6L581.6 429.6Z" fill="#ffffff"/>
<path d="M573.7 472.5L582.9 472.5L585.6 468.5L586.9 465.9L589.5 463.9L593.5 462.6L597.5 461.9L601.4 460.6L605.4 459.3L606.7 456.7L604.1 454.7L600.1 452.0L596.1 448.7L593.5 444.8L588.9 443.4L584.3 442.1L580.3 438.8L577.0 439.5L576.3 443.4L578.3 447.4L577.6 451.4L573.7 454.0Z" fill="#ffffff"/>
<path d="M606.7 461.3L603.4 461.9L602.8 465.2L604.7 467.2L608.0 467.9L609.4 464.6Z" fill="#ffffff"/>
<path d="M593.5 464.6L592.2 472.5L597.5 472.5L601.4 468.5L600.1 465.9Z" fill="#ffffff"/>
<path d="M704.9 401.1L707.6 400.5L709.5 402.5L712.2 401.8L710.9 399.8L708.2 397.2L712.2 396.5L716.4 395.6L714.8 393.9L709.5 393.2L704.9 394.3L702.9 395.9L699.0 395.6L695.0 396.5L697.0 399.2L699.0 401.8L700.9 404.4L702.9 403.8Z" fill="#ffffff"/>
<path d="M732.6 470.0L733.3 467.2L733.4 467.0L695.0 467.0L695.0 470.0Z" fill="#ffffff"/>
<path d="M807.3 460.0L803.4 460.6L799.4 461.3L795.4 460.6L790.2 460.0L787.5 458.0L784.9 456.0L780.9 454.7L778.3 455.3L774.3 453.3L770.3 453.7L766.4 454.7L762.4 456.0L761.1 459.3L758.4 460.6L754.5 460.0L750.5 459.3L747.2 460.6L745.0 461.7L745.0 467.0L743.8 467.0L743.9 467.2L743.9 470.0L815.0 470.0L815.0 472.5L820.6 472.5L820.6 460.9L815.0 460.9L811.3 461.9Z" fill="#ffffff"/>
<path d="M830.9 463.0L828.2 463.5L824.3 462.6L820.3 461.3L813.7 460.0L813.7 470.0L815.0 470.0L815.0 472.5L834.8 472.5L836.1 467.2L835.5 464.6L834.8 463.5Z" fill="#ffffff"/>
<path d="M536.9 503.7L539.6 506.3L541.6 509.0L544.9 511.0L548.2 512.3L551.5 513.6L554.1 513.0L556.8 512.3L558.1 513.6L560.1 513.0L562.0 511.6L563.4 509.6L565.4 507.7L564.0 506.3L560.7 507.0L559.4 509.0L556.1 509.6L552.8 509.0L550.8 506.3L549.9 503.0L549.5 499.3L548.2 497.8L546.2 495.8L543.5 493.8L541.6 494.4L539.6 492.5L537.6 491.4L534.3 491.8L531.0 491.1L527.0 490.5L525.0 490.1L527.0 491.8L529.0 493.8L531.7 497.1L534.3 500.4Z" fill="#ffffff"/>
<path d="M533.6 502.8L531.7 499.7L529.7 496.4L528.3 493.8L527.0 491.1L525.0 490.5L526.4 493.8L528.3 497.1L530.3 500.4L532.7 503.3Z" fill="#ffffff"/>
<path d="M562.0 511.6L560.1 513.0L558.1 513.6L559.0 515.0L567.8 515.0L567.3 514.3L564.7 512.3Z" fill="#ffffff"/>
<path d="M666.2 525.5L668.8 528.1L671.5 528.8L675.4 528.1L679.4 528.8L683.4 528.1L687.3 527.5L691.3 528.1L693.3 532.1L692.6 536.1L693.9 538.7L695.0 540.0L695.0 515.0L658.0 515.0L658.9 517.6L660.9 520.2L663.5 522.9Z" fill="#ffffff"/>
<path d="M815.0 470.0L695.0 470.0L695.0 515.0L695.0 560.0L815.0 560.0Z" fill="#ffffff"/>
<path d="M813.7 468.7L813.7 470.0L815.0 470.0L815.0 475.6L820.3 475.9L825.6 474.6L829.5 472.0L833.5 468.7Z" fill="#ffffff"/>
<path d="M852.7 486.5L853.3 483.9L852.7 480.6L852.0 477.9L854.0 475.9L856.0 473.3L854.6 472.0L851.3 474.6L848.0 476.6L847.8 479.3L849.1 481.2L849.6 484.5L850.7 487.2Z" fill="#ffffff"/>
<path d="M871.8 471.1L869.2 472.0L868.9 474.0L870.5 475.3L873.1 474.6L874.5 472.6Z" fill="#ffffff"/>
<path d="M856.0 487.8L854.0 489.8L854.6 491.8L856.0 489.8L859.3 487.8L862.6 486.5L865.9 485.2L868.5 483.2L869.8 479.9L870.2 476.6L868.5 475.9L867.6 479.3L865.9 482.6L862.6 484.5L859.3 485.9Z" fill="#ffffff"/>
<path d="M854.1 491.8L855.7 492.2L856.0 489.8L854.0 489.8Z" fill="#ffffff"/>
<path d="M841.2 501.5L841.0 503.3L841.8 505.0L843.0 503.7L842.8 501.1Z" fill="#ffffff"/>
<path d="M820.9 523.5L822.3 522.9L824.3 520.9L825.6 518.2L824.9 515.6L823.6 513.0L824.9 511.0L825.8 508.3L824.3 506.3L822.3 504.6L819.6 504.4L817.0 505.0L815.0 505.7L815.0 514.3L815.7 514.9L817.0 516.3L818.3 518.9L820.3 520.9Z" fill="#ffffff"/>
<path d="M822.3 542.0L821.6 538.7L819.6 535.4L818.3 531.5L817.0 528.1L815.0 526.2L815.0 530.1L815.7 532.1L817.0 536.1L819.0 540.0L820.9 542.7Z" fill="#ffffff"/>
<path d="M834.8 546.7L832.2 546.0L826.9 545.1L822.3 544.0L821.9 545.1L824.3 546.0L829.5 546.9L834.2 547.7Z" fill="#ffffff"/>
<path d="M836.8 536.7L837.5 533.4L838.8 530.1L838.1 527.5L835.5 526.8L832.2 529.5L828.9 532.1L826.2 534.8L827.2 537.4L829.5 539.4L832.8 540.7L835.5 540.0Z" fill="#ffffff"/>
<path d="M843.4 516.3L843.8 513.6L843.0 511.0L841.2 511.6L841.2 514.3L842.1 516.9L843.4 518.9L844.7 518.2Z" fill="#ffffff"/>
<path d="M846.1 523.5L848.0 522.9L847.4 520.9L844.7 520.2Z" fill="#ffffff"/>
<path d="M846.1 524.2L846.1 526.2L847.4 527.5L849.4 526.2L848.7 523.5Z" fill="#ffffff"/>
<path d="M841.2 521.8L842.5 520.2L842.1 519.6L840.8 520.9Z" fill="#ffffff"/>
<path d="M843.4 542.4L844.7 542.0L843.4 539.4L842.1 536.7L843.4 535.8L847.0 535.4L846.7 534.5L843.4 534.8L841.4 535.4L840.1 536.1L840.8 538.7L840.1 541.4L841.2 542.0L842.1 540.0Z" fill="#ffffff"/>
<path d="M850.9 535.7L852.3 535.4L852.0 533.2L850.7 533.4Z" fill="#ffffff"/>
<path d="M848.7 539.6L853.3 539.8L853.3 539.0L848.7 538.7Z" fill="#ffffff"/>
<path d="M865.2 545.3L867.2 546.7L869.8 547.3L873.1 546.7L876.5 548.0L879.8 549.6L880.4 548.6L877.8 546.0L875.1 543.3L872.5 541.4L869.2 539.4L865.9 538.1L863.2 538.7L860.6 538.1L858.6 536.1L856.0 536.7L857.3 539.4L859.9 540.7L862.6 542.0L865.9 543.3Z" fill="#ffffff"/>
<path d="M882.4 542.0L879.8 543.3L880.0 544.0L881.7 543.3L884.0 542.4L883.7 541.4Z" fill="#ffffff"/>
<path d="M841.4 546.9L836.8 546.4L836.8 547.3L841.4 548.0L846.7 548.2L846.7 547.3Z" fill="#ffffff"/>
<path d="M846.7 548.9L849.6 548.0L849.4 547.0L846.1 548.0Z" fill="#ffffff"/>
<path d="M582.3 613.7L584.9 616.4L587.6 617.7L590.9 618.0L592.8 617.0L589.5 614.4L587.6 612.4L588.2 609.8L590.2 607.8L592.2 605.8L591.7 605.0L580.2 605.0L580.0 606.5L580.6 610.4Z" fill="#ffffff"/>
<path d="M599.1 611.9L602.8 611.7L602.8 610.6L599.1 610.8Z" fill="#ffffff"/>
<path d="M664.9 525.8L668.2 528.4L672.2 528.8L676.8 528.4L681.4 527.8L685.4 527.1L688.0 528.4L690.7 529.7L692.7 531.7L693.3 535.0L694.0 538.3L695.0 539.7L695.0 515.0L657.8 515.0L657.6 515.9L659.6 519.2L662.3 522.5ZM703.9 578.0L705.2 581.3L706.5 583.5L710.5 583.0L714.5 581.9L717.8 580.0L720.4 578.0L722.4 575.3L723.7 572.7L725.0 570.0L727.0 568.7L727.7 566.1L727.0 564.1L729.0 562.1L731.0 560.1L731.1 560.0L696.7 560.0L697.3 562.1L699.3 566.1L700.6 570.0L701.9 574.0Z" fill="#ffffff"/>
<path d="M916.1 591.9L918.1 589.9L917.4 588.6L914.8 588.0L913.5 585.3L912.1 584.3L912.8 587.3L913.5 589.9L912.8 592.6L914.1 593.6Z" fill="#ffffff"/>
<path d="M904.9 602.8L907.5 601.2L910.2 598.5L912.1 595.9L912.8 593.6L910.2 595.0L907.5 597.2L904.9 599.2L903.3 601.6Z" fill="#ffffff"/>
<path d="M899.8 564.0L902.2 565.9L902.9 565.1L900.2 563.2Z" fill="#ffffff"/>
<path d="M917.4 558.9L918.1 559.8L920.5 558.6L920.7 557.6L919.4 558.2Z" fill="#ffffff"/>
<path d="M902.9 556.4L903.8 556.4L903.8 555.3L902.9 555.3Z" fill="#ffffff"/>
<path d="M695.0 470.0L695.0 467.0L695.0 425.0L655.0 425.0L655.0 515.0L695.0 515.0Z" fill="#ffffff"/>
<path d="M574.0 538.8L572.0 541.4L572.7 543.4L574.6 546.1L576.6 549.4L579.3 552.7L581.9 556.0L584.6 558.6L587.2 560.6L587.6 563.9L587.2 567.9L586.8 571.8L585.9 577.1L585.0 582.4L583.9 587.7L582.8 592.3L581.9 596.9L581.3 600.9L580.2 605.0L591.8 605.0L592.5 600.9L593.8 598.3L594.5 595.0L597.1 593.0L598.4 590.3L601.1 589.7L603.7 587.7L604.4 585.0L603.1 582.1L605.0 583.7L607.7 583.7L609.0 582.4L610.3 580.4L612.3 578.2L614.0 575.8L615.4 573.1L615.9 570.5L618.3 567.9L621.6 566.5L624.9 565.2L626.9 563.2L628.2 560.6L628.6 557.3L629.1 554.0L630.8 551.3L632.8 548.7L634.1 546.1L633.5 542.8L630.2 540.8L626.2 539.4L622.2 538.8L618.3 537.5L614.3 536.1L613.2 534.2L612.3 531.5L611.0 528.9L609.0 528.0L607.0 528.9L603.7 528.2L601.1 526.2L599.8 524.3L597.1 522.3L593.8 520.9L590.5 521.6L587.9 520.9L585.2 519.6L581.3 520.0L578.6 520.9L577.3 522.9L574.6 524.3L577.3 526.9L576.6 530.2L575.3 533.5L573.3 536.1Z" fill="#ffffff"/>
<path d="M570.0 524.0L573.3 525.6L576.0 524.9L577.3 522.9L574.6 524.3L572.7 524.3L569.4 522.3L566.7 520.3L567.4 518.3L564.7 516.3L562.5 515.0L557.7 515.0L558.1 516.3L560.8 517.6L564.1 519.6L566.7 522.3Z" fill="#ffffff"/>
<path d="M576.1 439.1L576.6 442.6L577.9 447.9L575.2 453.1L573.5 456.7L605.6 456.7L601.7 451.4L596.4 445.2L593.7 437.3L592.9 433.8L596.4 431.1L594.6 429.4L589.3 425.8L582.3 424.1L583.2 427.6L581.4 430.2L577.0 433.8L578.8 435.5Z" fill="#ffffff"/>
<path d="M577.9 429.2L580.5 428.9L580.1 426.3L577.4 426.3Z" fill="#ffffff"/>
<path d="M796.7 465.1L802.0 471.7L821.8 476.3L841.7 468.4L839.0 461.1L797.4 461.1Z" fill="#ffffff"/>
<path d="M848.3 481.0L849.3 483.6L849.6 486.3L851.6 487.3L853.3 486.3L852.9 483.6L851.6 481.0L852.2 479.0L853.8 477.0L852.9 475.4L850.2 476.7L847.6 478.3Z" fill="#ffffff"/>
<path d="M854.6 490.9L855.5 491.8L857.5 490.2L860.2 488.9L863.5 487.8L866.8 486.3L869.4 483.6L870.7 480.3L871.4 477.0L869.4 476.3L868.7 479.6L866.8 483.0L864.1 484.9L860.8 486.3L857.5 487.6L854.9 489.6Z" fill="#ffffff"/>
<path d="M869.4 473.3L870.7 475.0L873.4 474.6L874.7 472.4L872.7 470.7L870.1 471.7Z" fill="#ffffff"/>
<path d="M854.6 492.2L856.5 491.5L856.2 489.2L853.8 489.6Z" fill="#ffffff"/>
<path d="M742.2 428.4L742.9 426.8L741.4 426.1L739.5 426.5L740.3 427.6L739.9 429.5L738.4 430.3L736.1 431.0L735.3 428.7L734.5 426.8L732.6 425.3L730.0 424.2L726.9 423.4L723.9 422.6L721.2 422.3L720.8 420.7L718.9 419.7L716.2 419.6L713.2 420.0L710.9 420.5L708.6 421.5L706.3 422.6L703.6 424.2L701.0 426.5L698.7 428.7L696.8 431.4L695.0 434.1L695.0 467.0L745.0 467.0L745.0 428.5L743.7 429.1Z" fill="#ffffff"/>
<path d="M591.8 471.1L593.1 468.4L593.1 464.4L597.1 461.8L601.1 460.5L605.0 459.2L606.4 457.2L604.4 455.2L601.1 451.9L597.1 447.3L594.5 444.0L593.8 443.3L592.5 441.3L590.5 444.0L587.9 444.6L585.9 442.0L583.9 438.7L578.0 438.7L573.3 438.7L574.6 442.6L576.6 445.9L578.0 449.3L577.3 451.9L575.3 453.2L574.6 455.9L575.3 458.5L573.3 459.6L571.3 457.2L570.9 454.5L568.7 453.2L566.1 452.6L562.8 451.9L559.4 450.6L556.8 448.6L554.8 446.6L554.8 444.0L554.8 438.7L533.7 438.7L533.7 479.6L574.6 479.6L587.9 473.0L590.5 470.7Z" fill="#ffffff"/>
<path d="M609.0 463.8L606.4 461.1L603.1 461.8L602.7 464.4L605.0 465.8L607.7 467.1L610.1 467.1Z" fill="#ffffff"/>
<path d="M597.8 468.4L594.5 470.1L591.8 471.7L593.1 472.8L596.5 471.1L599.8 469.3L600.4 467.8Z" fill="#ffffff"/>
<path d="M619.6 442.0L622.2 442.6L622.9 438.7L616.9 438.7Z" fill="#ffffff"/>
<path d="M538.3 504.8L540.3 507.4L542.9 509.4L546.2 511.4L548.9 512.7L552.2 514.0L555.5 513.3L557.5 512.7L559.4 512.7L560.8 511.4L562.1 509.4L564.1 507.4L563.4 506.1L560.8 506.7L559.4 508.7L556.1 509.4L552.8 508.1L550.9 505.4L550.2 502.1L549.5 498.8L548.2 497.1L546.2 495.2L544.3 493.9L542.3 494.4L540.3 492.9L537.6 491.5L535.0 491.3L533.7 491.3L533.7 498.1L535.0 500.1L536.3 502.1Z" fill="#ffffff"/>
<path d="M560.8 511.4L559.4 512.7L557.5 512.7L558.1 514.7L558.8 515.0L567.4 515.0L566.7 514.0L563.4 512.0Z" fill="#ffffff"/>
<path d="M580.6 507.7L578.0 506.1L574.6 504.8L571.3 504.1L568.0 504.8L568.7 505.8L572.7 506.1L576.0 507.1L579.3 508.5Z" fill="#ffffff"/>
<path d="M583.9 508.7L584.2 510.0L587.2 510.7L589.2 509.8L587.2 508.5Z" fill="#ffffff"/>
<path d="M591.2 510.6L592.9 510.6L592.9 509.8L591.2 509.8Z" fill="#ffffff"/>
<path d="M574.6 511.5L576.6 511.5L576.6 510.7L574.6 510.7Z" fill="#ffffff"/>
<path d="M719.8 470.0L726.3 470.0L726.0 469.9L724.2 468.0L722.0 468.3L719.8 469.9ZM730.0 470.0L730.8 470.0L730.4 469.8Z" fill="#c0c0c0"/>
<path d="M533.0 501.1L531.4 498.0L529.8 495.1L528.5 492.5L527.4 491.9L528.0 493.5L529.0 495.6L530.6 498.5L532.4 501.5Z" fill="#c0c0c0"/>
<path d="M813.3 513.6L812.0 511.0L811.0 514.3L809.7 515.6L808.4 513.0L807.3 509.6L806.7 505.7L805.7 503.0L804.7 504.6L803.4 501.7L801.4 500.9L799.4 501.5L799.1 503.7L796.8 506.3L793.5 509.6L790.2 513.0L787.5 516.9L785.9 520.9L784.2 524.2L782.9 522.2L781.6 518.9L780.2 514.9L778.9 511.0L778.0 507.7L776.7 505.4L775.0 505.9L773.2 504.6L772.3 502.4L769.0 501.5L765.0 502.1L761.1 501.7L757.1 500.4L756.1 501.2L757.9 503.3L759.5 505.7L757.1 508.3L754.5 511.0L750.5 513.6L747.2 515.6L743.2 517.6L739.9 518.2L738.0 519.2L739.3 520.2L742.6 520.9L745.9 520.0L747.9 520.2L746.5 522.9L743.9 526.2L741.3 529.5L738.6 532.8L736.0 536.1L734.0 540.0L732.7 544.0L733.3 548.0L734.6 551.9L734.0 555.2L732.7 558.3L731.3 560.0L815.0 560.0L815.0 531.9L813.3 530.1L812.0 526.8L813.3 522.9L813.9 518.9Z" fill="#c0c0c0"/>
<path d="M750.0 502.2L752.0 502.4L753.9 501.8L755.7 501.9L756.2 500.5L754.8 499.5L753.4 498.8L751.6 499.3L749.9 498.8L748.7 497.5L747.7 495.7L746.2 494.6L744.0 495.3L744.6 496.5L745.8 497.6L746.9 499.4L748.3 501.3Z" fill="#c0c0c0"/>
<path d="M701.7 491.1L703.9 492.4L706.1 493.0L708.1 491.5L710.6 490.4L713.2 491.1L715.4 492.0L718.5 492.4L722.0 492.1L725.1 492.7L727.3 492.4L728.0 490.6L728.4 488.4L728.8 485.8L728.9 483.6L727.3 484.0L723.8 484.2L720.2 484.7L717.2 484.5L715.8 483.6L715.4 480.9L714.1 479.2L712.1 479.6L713.0 481.8L712.5 484.0L711.0 484.7L710.1 483.1L709.0 480.9L707.0 478.7L704.8 476.1L702.6 473.5L700.4 470.4L697.8 470.0L697.1 470.0L695.0 470.5L695.0 488.3L696.5 489.3L699.1 490.0Z" fill="#c0c0c0"/>
<path d="M728.2 476.1L731.7 476.1L734.8 476.5L737.2 475.7L736.5 473.9L734.3 472.4L732.1 470.8L730.8 470.0L730.0 470.0L729.1 470.6L726.3 470.0L719.8 470.0L718.5 473.0L719.4 475.7L721.6 476.5L724.6 476.5Z" fill="#c0c0c0"/>
<path d="M731.7 509.8L733.5 513.3L735.2 516.8L737.0 519.9L738.3 522.8L742.3 522.8L740.3 519.1L738.6 516.0L736.8 512.9L735.0 509.4L733.3 505.9L731.5 502.8L729.8 499.7L728.2 497.1L726.4 495.3L724.6 495.9L725.1 497.4L726.4 499.6L728.2 502.7L729.9 506.2Z" fill="#c0c0c0"/>
<path d="M724.8 496.2L725.4 495.9L724.4 493.7L723.8 493.9Z" fill="#c0c0c0"/>
<path d="M695.0 541.4L695.0 560.0L698.1 560.0L697.0 554.6L697.6 550.6L697.4 546.7L696.6 543.3Z" fill="#c0c0c0"/>
<path d="M723.4 535.4L723.0 537.7L724.3 538.7L725.7 537.4L725.1 535.0Z" fill="#c0c0c0"/>
<path d="M660.9 501.7L662.9 498.3L664.9 495.0L666.9 491.7L668.9 488.4L671.5 485.8L672.8 484.7L671.1 483.4L669.3 483.1L668.6 479.8L668.6 476.3L668.9 473.9L672.2 473.2L676.1 473.6L679.4 474.2L678.8 471.3L678.5 468.6L676.8 467.0L674.8 465.7L678.1 464.0L680.8 462.7L683.4 460.9L685.7 460.0L686.5 458.4L687.6 457.0L689.1 455.8L690.7 454.7L692.1 453.5L691.4 452.4L691.6 450.5L691.4 448.9L692.9 448.5L694.1 449.7L694.1 453.1L695.0 453.3L695.0 444.6L694.1 444.4L692.9 445.5L691.4 446.4L689.9 446.7L688.6 445.5L687.5 442.8L688.0 439.8L690.9 437.2L694.4 434.5L695.0 433.8L695.0 425.0L655.0 425.0L655.0 515.0L658.3 515.0L658.7 509.6L659.6 505.6Z" fill="#c0c0c0"/>
<path d="M684.7 474.6L684.1 475.9L682.8 477.6L680.8 479.2L679.8 481.6L677.5 483.1L674.8 483.8L672.8 484.7L674.8 485.5L677.5 485.1L681.4 484.7L685.4 484.5L688.7 484.2L692.0 483.8L694.0 484.5L694.6 487.1L695.0 487.1L695.0 472.6L693.3 471.5L690.9 472.6L689.4 473.6L686.7 473.9Z" fill="#c0c0c0"/>
<path d="M707.1 435.6L705.5 437.1L704.4 438.7L704.0 440.6L704.4 442.5L704.9 444.4L704.0 446.3L703.1 448.2L702.1 450.0L701.0 451.3L699.0 452.3L697.5 452.6L696.4 451.3L695.8 449.4L695.2 447.1L695.0 446.5L695.0 454.6L696.8 454.8L698.7 454.7L701.0 454.8L703.2 454.5L705.5 454.1L707.8 453.2L709.0 452.4L709.7 450.9L710.9 449.7L712.4 449.4L711.6 447.8L712.4 446.3L713.5 445.2L716.2 444.8L718.9 444.4L718.9 442.9L716.2 443.4L713.2 443.9L711.5 443.2L710.1 441.7L709.4 439.8L709.7 437.9L710.9 436.0L712.4 434.5L713.9 432.9L714.3 431.4L712.8 431.0L710.9 431.4L709.7 432.6L708.6 434.1Z" fill="#c0c0c0"/>
<path d="M741.5 557.5L740.4 560.0L746.2 560.0L746.8 558.1L747.5 554.2L746.1 552.2L743.5 554.8Z" fill="#ffffff"/>
<path d="M787.5 522.9L787.2 525.5L788.2 527.1L789.5 526.2L789.1 523.5Z" fill="#ffffff"/>
<path d="M701.3 480.9L703.5 483.1L705.1 485.1L706.1 484.5L705.7 482.1L707.5 483.1L708.3 482.4L706.6 480.7L703.9 478.7L701.3 476.1L698.9 473.0L697.4 470.0L697.1 470.0L695.0 470.6L695.0 473.2L696.5 475.2L698.7 478.3Z" fill="#ffffff"/>
<path d="M702.2 486.5L704.4 486.8L704.8 485.4L701.7 485.1Z" fill="#ffffff"/>
<path d="M713.4 486.4L715.8 486.4L715.8 485.8L713.4 485.8Z" fill="#ffffff"/>
<path d="M723.3 485.8L725.3 485.4L725.1 484.7L722.9 485.1Z" fill="#ffffff"/>
<path d="M742.9 569.4L744.2 566.1L745.5 562.1L746.2 560.0L740.1 560.0L739.6 560.8L738.3 564.8L738.5 568.1L740.2 570.0Z" fill="#ffffff"/>
<path d="M692.7 471.5L693.6 473.9L695.0 476.5L695.0 470.9Z" fill="#ffffff"/>
<path d="M692.3 480.8L693.6 480.5L693.3 476.9L692.0 477.2Z" fill="#ffffff"/>
<path d="M661.3 430.9L658.3 430.6L655.0 431.3L655.0 435.3L656.3 435.3L659.0 434.3L661.6 432.7Z" fill="#ffffff"/>
<path d="M672.4 455.1L671.1 455.1L670.2 454.1L668.2 455.1L667.8 457.4L668.9 459.4L670.9 459.1L672.4 457.4Z" fill="#ffffff"/>
<path d="M695.8 453.2L697.3 453.0L697.0 451.6L695.5 451.8Z" fill="#ffffff"/>
<path d="M460.9 427.6L464.3 429.6L460.3 430.9L457.0 432.2L458.3 433.9L462.9 434.2L465.6 435.2L462.3 437.5L459.6 440.1L459.0 442.8L462.3 444.8L466.2 445.8L469.5 446.1L472.2 445.7L468.2 449.4L464.3 452.0L461.6 453.7L464.9 452.7L468.9 450.7L472.2 448.1L474.8 445.4L477.5 443.2L479.4 441.5L481.4 442.8L483.4 442.1L486.7 443.2L490.7 443.4L493.2 444.1L492.0 443.2L492.0 422.3L486.1 421.2L478.8 420.3L472.2 419.0L467.6 419.9L462.9 422.0L458.3 425.6ZM503.2 449.4L501.3 446.7L499.3 444.5L496.0 445.4L493.3 444.1L493.2 444.1L496.0 446.1L499.3 447.4L501.9 450.0L504.6 452.4L506.5 453.3L505.9 452.0Z" fill="#07870c"/>
<path d="M474.8 449.5L476.4 449.0L476.1 447.9L474.6 448.5Z" fill="#07870c"/>
<path d="M586.9 472.5L589.5 472.5L589.5 467.2L587.6 467.2Z" fill="#07870c"/>
<path d="M742.6 393.2L743.9 394.8L747.2 394.3L748.5 393.0L745.9 392.6Z" fill="#ff0000"/>
<path d="M755.1 409.7L753.1 412.4L751.2 415.0L749.8 417.7L751.8 419.0L754.5 419.6L756.5 420.3L755.1 418.3L754.5 415.7L756.5 412.4L759.8 409.7L763.7 407.8L769.0 405.8L771.7 404.2L771.0 403.8L767.0 404.8L762.4 405.8L758.4 407.5Z" fill="#ff0000"/>
<path d="M814.6 396.5L813.3 393.9L810.0 392.2L806.7 391.9L804.0 393.2L804.7 395.2L806.7 396.9L810.0 398.2L813.3 398.5Z" fill="#ff0000"/>
<path d="M813.9 400.9L815.9 401.4L815.9 399.3L813.9 399.8Z" fill="#ff0000"/>
<path d="M750.5 459.3L754.5 460.0L758.4 460.6L761.1 459.3L762.4 456.0L766.4 454.7L770.3 453.7L774.3 453.3L778.3 455.3L780.9 454.7L784.9 456.0L787.5 458.0L790.2 460.0L795.4 460.6L799.4 461.3L803.4 460.6L807.3 460.0L811.3 461.9L815.0 460.9L820.6 461.9L820.6 406.2L815.0 406.2L811.3 406.4L806.0 407.1L800.7 408.4L797.4 409.7L796.1 411.7L792.8 413.0L788.8 413.7L787.5 416.3L783.5 417.0L781.6 417.7L779.6 415.7L778.9 419.0L779.6 422.3L780.2 426.3L778.9 428.9L776.3 430.9L776.3 428.2L777.6 424.9L777.2 421.0L777.6 417.7L775.6 415.0L773.0 415.7L770.3 419.0L770.3 422.3L772.3 426.3L769.0 424.3L765.7 423.6L762.4 422.6L761.1 424.3L758.4 425.6L755.1 424.9L751.8 425.6L747.9 426.5L745.0 427.4L745.0 461.7L747.2 460.6ZM732.6 470.0L744.2 470.0L743.9 467.2L743.8 467.0L733.4 467.0L733.3 467.2Z" fill="#ff0000"/>
<path d="M830.9 463.0L834.8 463.5L838.1 462.6L840.1 460.0L842.1 457.3L844.7 456.7L846.7 458.0L848.0 460.6L850.7 463.9L854.6 466.6L858.6 465.9L860.6 466.6L859.9 472.5L863.9 472.5L865.2 467.2L866.5 464.6L867.9 461.3L868.5 458.0L866.5 456.0L863.9 454.7L861.3 454.0L863.2 452.0L865.9 449.4L868.5 447.4L871.8 446.1L875.8 445.4L879.8 444.8L883.7 445.8L887.0 444.8L889.0 442.1L891.7 441.1L894.3 442.1L896.9 440.1L899.6 438.8L898.3 440.8L896.3 443.4L894.3 446.1L891.7 448.1L889.7 450.0L888.7 453.3L889.0 456.7L890.3 460.0L892.3 458.6L894.3 456.7L896.3 454.7L897.6 452.0L895.6 450.7L896.9 448.1L898.9 446.1L901.6 444.8L904.9 443.7L908.2 443.2L911.5 440.8L914.8 439.5L917.4 438.1L920.1 437.5L919.4 434.8L920.7 432.2L924.7 431.5L927.3 432.9L930.0 434.2L932.0 432.2L933.7 430.9L931.3 430.0L928.0 429.6L924.7 426.9L921.4 424.9L917.4 423.3L912.8 422.6L908.8 422.3L908.2 424.3L904.9 423.6L899.6 423.0L894.3 422.3L892.3 420.3L887.7 420.3L883.7 419.4L881.1 417.7L877.1 416.3L871.8 415.7L867.9 415.4L867.2 417.7L862.6 418.6L858.6 418.3L856.0 419.6L854.0 418.3L852.7 415.7L850.7 413.7L847.4 413.3L844.1 414.6L839.4 413.7L834.8 413.7L830.9 412.4L826.9 411.1L829.5 409.7L832.8 408.4L831.5 406.4L827.6 405.1L822.9 403.8L819.0 404.4L820.9 402.2L817.6 402.5L813.7 403.1L813.7 460.0L820.3 461.3L824.3 462.6L828.2 463.5Z" fill="#ff0000"/>
<path d="M817.6 397.2L813.7 397.8L813.7 399.8L816.3 400.5L819.6 400.1L820.9 398.8Z" fill="#ff0000"/>
<path d="M871.2 407.1L867.2 406.7L863.9 407.5L865.0 408.8L867.9 409.3L871.8 409.3L873.8 408.0Z" fill="#ff0000"/>
<path d="M875.8 408.0L876.1 409.1L878.4 409.7L881.1 409.3L878.4 408.4Z" fill="#ff0000"/>
<path d="M868.1 414.1L871.6 413.8L871.2 412.8L867.9 413.0Z" fill="#ff0000"/>
<path d="M920.7 419.6L923.6 419.3L922.0 418.3L919.4 418.7Z" fill="#ff0000"/>
<path d="M871.8 465.9L872.5 462.6L871.8 459.3L871.2 456.0L870.2 456.0L869.8 459.3L870.5 463.3L870.2 467.2L871.6 467.9Z" fill="#ff0000"/>
<path d="M932.4 436.4L935.0 437.6L935.0 437.2L932.4 436.0Z" fill="#07870c"/>
<path d="M519.1 484.5L521.1 487.2L523.7 489.6L527.0 490.5L531.0 491.1L534.3 491.8L535.6 491.7L535.6 464.1L517.0 464.1L515.1 470.0L514.7 474.0L515.5 477.9L517.1 481.2Z" fill="#07870c"/>
<path d="M471.9 509.4L473.2 509.4L473.2 508.1L471.9 508.1Z" fill="#07870c"/>
<path d="M742.3 475.2L744.9 476.5L745.4 475.2L744.5 471.7L745.5 470.0L730.6 470.0L730.4 470.4L733.5 471.3L736.5 472.6L739.6 473.9Z" fill="#ff0000"/>
<path d="M710.6 518.4L711.4 522.8L712.3 520.6L714.1 519.3L715.8 520.1L718.0 519.7L719.8 520.6L721.6 520.1L722.9 521.5L723.8 519.7L725.1 519.3L726.4 521.0L727.1 519.3L728.2 516.6L728.6 514.0L729.9 512.2L731.0 510.9L730.1 508.7L729.9 506.1L714.5 506.1L713.6 508.7L713.2 511.3L712.8 514.0L711.0 515.7Z" fill="#ff3c00"/>
<path d="M856.0 469.3L856.6 473.3L859.3 473.7L861.9 472.0L863.2 469.3Z" fill="#ff0000"/>
<path d="M872.5 555.2L871.6 552.6L870.5 550.6L869.8 553.9L869.2 557.2L867.2 557.9L864.6 556.6L862.8 554.6L861.9 552.6L859.3 551.7L856.0 551.9L852.7 553.3L849.4 554.6L846.1 556.6L844.1 560.0L844.1 562.5L875.1 562.5L875.1 560.0L873.8 557.2Z" fill="#a4d60a"/>
<path d="M834.8 582.7L836.8 584.0L840.1 583.3L843.4 582.7L846.7 581.3L850.7 580.0L854.6 579.4L858.6 580.0L861.3 581.3L863.2 583.3L865.2 582.0L865.9 584.6L867.9 587.3L870.5 589.3L873.1 588.6L876.5 589.3L879.8 588.0L881.1 585.3L883.1 582.0L884.4 578.7L885.3 574.7L884.4 571.4L882.4 568.8L879.8 566.1L877.1 563.5L875.1 560.9L873.8 557.6L872.5 555.6L871.6 552.9L870.5 550.9L869.8 554.3L869.2 557.6L867.2 558.2L864.6 556.9L862.6 554.9L861.9 552.3L858.6 550.9L856.0 551.6L854.0 554.9L850.7 554.3L848.0 556.2L844.7 558.9L842.1 562.2L838.1 563.5L834.2 565.5L832.2 568.1L832.8 570.8L833.5 573.4L834.8 576.7L835.5 580.0Z" fill="#a4d60a"/>
<path d="M874.2 593.2L874.7 595.9L876.2 597.6L877.8 595.9L878.4 593.6Z" fill="#a4d60a"/>
<path d="M676.1 458.0L674.6 459.6L674.2 461.7L676.1 461.3L678.8 460.9L681.4 460.7L682.1 458.7L680.8 456.7L679.4 454.7L677.7 453.4L678.1 451.4L676.1 450.8L676.8 448.1L674.8 446.8L672.8 448.1L673.2 450.1L674.2 452.1L675.5 454.1L675.1 456.1Z" fill="#ffa500"/>
<path d="M670.9 455.1L672.4 454.7L672.2 453.0L670.6 453.4Z" fill="#ffa500"/>
<path d="M682.1 475.0L684.7 474.6L686.7 473.9L689.4 473.6L690.9 472.6L690.0 470.6L689.6 468.0L690.4 466.0L688.7 464.0L686.1 462.0L683.4 460.9L680.8 462.7L678.1 464.0L674.8 465.7L676.8 467.0L678.5 468.6L678.8 471.3L679.4 474.2Z" fill="#ffec00"/>
<path d="M692.1 476.5L693.1 476.5L693.1 474.6L692.0 474.6Z" fill="#ffec00"/>
<path d="M672.8 484.7L674.8 483.8L677.5 483.1L679.8 481.6L680.8 479.2L682.8 477.6L684.1 475.9L682.1 475.0L679.4 474.2L676.1 473.6L672.2 473.2L668.9 473.9L668.9 475.9L671.1 476.5L671.5 479.8L671.1 483.1Z" fill="#3aa40c"/>
<path d="M721.6 435.2L722.3 437.1L722.7 438.7L721.6 440.2L720.0 441.7L718.9 442.9L718.1 444.8L717.7 447.1L718.1 449.4L719.3 451.6L720.8 453.9L722.3 455.8L723.9 457.7L725.8 459.7L728.4 460.8L731.5 462.3L733.8 463.9L734.4 467.0L742.9 467.0L742.6 464.6L743.3 462.7L745.0 462.4L745.0 428.5L743.7 429.1L742.2 428.4L742.9 426.8L741.4 426.1L739.5 426.5L740.3 427.6L739.9 429.5L738.4 430.3L736.1 431.0L734.2 432.2L733.8 433.7L731.5 434.1L730.0 435.2L728.8 434.1L728.4 432.2L726.9 431.0L725.8 429.5L727.7 429.5L729.6 429.9L731.9 430.6L734.2 430.3L735.3 428.7L734.5 426.8L732.6 425.3L730.0 424.2L726.9 423.4L723.9 422.6L721.6 422.6L720.0 423.4L719.7 425.7L720.8 428.0L720.4 430.3L720.8 432.9Z" fill="#ff0000"/>
<path d="M707.8 454.7L710.1 454.3L709.7 453.0L707.4 453.2Z" fill="#ff0000"/>
<path d="M542.3 494.4L544.3 493.9L546.2 495.2L548.2 497.1L549.5 498.8L550.9 497.5L553.5 495.8L556.1 494.4L558.1 493.9L560.8 493.5L564.1 493.3L567.4 493.5L569.6 494.2L570.4 496.2L571.3 498.8L572.7 500.5L573.3 498.8L572.7 496.2L572.0 493.5L573.3 491.5L575.3 489.6L577.3 487.6L578.6 485.6L578.0 483.6L579.3 481.6L579.9 479.6L581.9 478.3L583.9 476.7L585.9 475.0L587.9 473.0L590.5 470.7L589.8 467.8L587.9 467.5L586.5 469.3L584.6 471.1L580.6 471.7L578.6 472.4L576.0 474.1L572.7 475.4L570.0 476.7L569.1 475.0L569.4 472.4L567.4 470.4L566.1 471.7L565.4 474.6L563.4 475.7L562.8 473.7L563.4 470.4L564.7 467.8L563.4 465.8L561.4 465.1L559.4 466.4L556.8 465.1L553.5 464.4L533.7 464.4L533.7 491.3L535.0 491.3L537.6 491.5L540.3 492.9Z" fill="#07870c"/>
<path d="M584.0 547.2L585.5 548.5L587.5 549.5L590.0 549.0L592.5 549.5L594.5 551.0L597.0 552.5L599.0 554.0L600.0 556.0L601.5 557.0L603.0 559.0L603.5 561.4L604.0 563.9L605.0 565.9L606.4 567.4L607.9 569.4L608.9 571.4L607.9 573.4L605.9 574.9L604.5 576.9L606.4 578.4L607.9 579.9L609.4 581.7L610.9 579.4L612.9 576.9L614.4 574.9L615.4 572.9L615.9 570.4L617.9 568.4L620.9 566.9L623.9 566.1L625.9 564.9L627.4 562.9L628.4 560.0L628.4 557.0L628.9 554.0L630.4 552.0L631.9 550.0L633.4 548.0L634.1 545.5L633.4 543.0L631.4 541.2L628.4 540.0L624.9 539.0L621.4 538.5L618.9 537.2L615.9 536.0L613.9 535.0L613.4 533.0L612.1 531.0L610.9 529.0L609.7 527.8L607.9 528.2L608.4 530.0L606.9 532.0L605.0 532.8L602.5 533.0L601.0 531.5L600.0 529.0L598.0 530.2L595.0 530.0L594.5 531.5L593.0 533.5L590.0 533.0L587.5 534.0L587.0 536.5L587.5 540.5L586.5 542.0L584.0 543.0L582.5 545.0Z" fill="#ffec00"/>
<path d="M781.5 491.5L780.2 494.2L778.2 496.2L776.2 498.1L774.9 500.8L772.9 502.8L774.0 504.8L775.6 506.1L777.2 505.8L778.9 507.4L779.8 511.4L780.9 515.3L782.2 519.3L783.5 522.6L784.8 524.3L786.4 521.3L788.1 517.3L790.8 513.3L794.1 510.0L797.4 506.7L799.6 504.1L800.0 501.9L801.3 500.8L803.3 501.1L805.0 502.8L806.0 504.8L807.3 502.8L808.6 500.1L810.6 498.1L809.9 496.2L808.0 495.2L805.3 496.6L802.0 497.2L800.7 498.1L798.0 497.5L794.7 496.6L791.4 495.2L788.8 493.9L786.8 492.2L787.2 489.6L785.5 487.6L782.8 486.9L780.9 488.2Z" fill="#6ab90b"/>
<path d="M779.8 481.6L781.5 483.6L782.8 486.9L785.5 487.6L787.2 489.6L786.8 492.2L788.8 493.9L791.4 495.2L794.7 496.6L798.0 497.5L800.7 498.1L802.0 497.2L805.3 496.6L808.0 495.2L809.9 496.2L811.3 498.8L812.6 501.5L813.2 504.1L815.2 506.1L817.2 505.4L819.8 504.8L822.5 505.0L824.5 506.7L826.1 508.7L826.9 510.7L827.8 508.7L828.4 506.3L831.7 505.4L835.0 504.1L838.3 502.1L841.0 499.5L842.7 496.8L843.2 493.5L842.3 490.2L840.3 487.6L841.7 485.6L843.6 483.3L841.0 483.6L838.3 482.3L839.7 480.3L842.3 479.0L844.3 479.6L846.9 478.3L849.6 477.0L852.9 475.0L855.5 473.0L856.2 470.4L858.8 468.4L860.2 465.8L857.5 465.1L854.2 463.8L851.6 461.8L850.2 459.2L847.6 456.9L844.3 456.5L841.7 457.8L841.0 459.8L837.7 461.8L835.7 463.8L837.0 465.8L840.3 466.4L839.0 468.0L835.7 469.3L831.7 471.1L829.1 473.0L825.8 475.0L821.8 475.7L817.2 475.4L812.6 474.6L808.6 473.7L804.6 472.4L802.7 471.1L802.0 468.4L800.0 465.8L797.4 464.4L794.7 466.4L792.1 468.4L789.4 471.1L788.1 473.7L786.1 476.3L782.2 477.7L779.5 479.6Z" fill="#ff7800"/>
<path d="M745.9 470.0L751.0 470.0L751.1 469.9L750.6 468.2L748.0 467.7L745.8 469.5Z" fill="#c0c0c0"/>
<path d="M746.7 481.4L748.4 483.0L750.6 483.1L752.0 481.4L752.4 478.7L751.5 476.1L750.2 473.9L749.8 471.7L751.0 470.0L745.9 470.0L746.2 471.7L745.8 474.3L746.7 476.5L746.2 479.2Z" fill="#c0c0c0"/>
<path d="M743.5 496.2L745.1 496.0L744.9 494.2L743.1 494.4Z" fill="#a4d60a"/>
<path d="M691.7 466.4L689.6 467.0L689.8 468.3L691.3 468.9L693.6 468.3L694.0 467.0Z" fill="#e3f10a"/>
<path d="M792.1 496.6L796.1 497.9L800.4 499.1L800.9 497.9L797.4 496.8L793.4 495.5L790.1 493.5L788.8 494.4Z" fill="#ffffff"/>
<path d="M800.2 501.6L801.7 502.1L804.3 501.5L803.3 498.4L800.0 498.8Z" fill="#ffffff"/>
<path d="M731.5 434.1L733.8 433.7L734.2 432.2L736.1 430.9L735.3 428.9L734.2 430.3L731.9 430.6L729.6 429.9L727.7 429.5L725.8 429.5L726.9 431.0L728.4 432.2L728.8 434.1L730.0 435.2Z" fill="#c0c0c0"/>
<path d="M561.4 464.8L557.7 466.2L559.4 467.2L562.1 468.0L565.0 467.8L563.8 465.6Z" fill="#c0c0c0"/>
<path d="M564.9 469.6L563.3 470.1L562.6 473.7L563.5 475.8L565.5 474.6L565.8 471.7Z" fill="#c0c0c0"/>
<path d="M566.7 469.6L567.8 473.0L569.2 475.2L569.8 473.0L569.1 470.3Z" fill="#c0c0c0"/>
<path d="M573.3 474.6L569.9 476.5L570.7 477.5L573.3 476.1L576.5 474.6L576.2 473.6Z" fill="#c0c0c0"/>
</g>
<g fill="none">
<path d="M679.0 486.0L677.5 490.0L673.5 493.0L669.0 495.7L669.0 498.8" stroke="#d4d4d4" stroke-width="0.55"/>
<path d="M669.0 498.8L666.0 499.0L665.5 503.0L661.5 503.6L661.0 506.2" stroke="#d4d4d4" stroke-width="0.55"/>
<path d="M669.0 498.6L673.0 501.5L686.5 509.5" stroke="#d4d4d4" stroke-width="0.55"/>
<path d="M673.0 501.5L673.0 513.5L664.7 514.8" stroke="#d4d4d4" stroke-width="0.55"/>
<path d="M686.5 509.5L695.5 504.0L696.5 503.5" stroke="#d4d4d4" stroke-width="0.55"/>
<path d="M692.5 484.5L691.0 488.0L693.0 491.0L694.0 500.0L696.5 503.5" stroke="#d4d4d4" stroke-width="0.55"/>
<path d="M693.0 491.0L695.0 489.5L694.5 486.0" stroke="#d4d4d4" stroke-width="0.55"/>
<path d="M696.5 503.5L700.9 504.3L713.4 508.7" stroke="#d4d4d4" stroke-width="0.55"/>
<path d="M713.9 492.0L713.9 506.2" stroke="#d4d4d4" stroke-width="0.55"/>
<path d="M700.9 504.5L701.4 510.0L699.0 516.0L700.4 518.2" stroke="#d4d4d4" stroke-width="0.55"/>
<path d="M686.5 509.5L686.0 513.5L682.5 515.0L682.0 516.5" stroke="#d4d4d4" stroke-width="0.55"/>
<path d="M673.0 513.8L675.0 517.0L679.0 515.6L682.0 516.5L685.5 518.5" stroke="#d4d4d4" stroke-width="0.55"/>
<path d="M685.5 518.5L688.0 517.0L694.0 518.0L699.0 517.5L700.4 518.5" stroke="#d4d4d4" stroke-width="0.55"/>
<path d="M700.4 518.5L699.0 522.0L696.0 525.4L693.5 527.9L693.0 529.9" stroke="#d4d4d4" stroke-width="0.55"/>
<path d="M685.5 518.5L685.0 524.0L684.5 526.9" stroke="#d4d4d4" stroke-width="0.55"/>
<path d="M676.5 520.0L676.5 527.9" stroke="#d4d4d4" stroke-width="0.55"/>
<path d="M680.5 520.0L681.0 526.9" stroke="#d4d4d4" stroke-width="0.55"/>
<path d="M682.5 522.0L682.8 526.4" stroke="#d4d4d4" stroke-width="0.55"/>
<path d="M675.0 517.0L676.5 520.0L680.5 520.0L682.5 522.0" stroke="#d4d4d4" stroke-width="0.55"/>
<path d="M670.0 522.0L670.5 526.9" stroke="#d4d4d4" stroke-width="0.55"/>
<path d="M665.0 520.0L668.0 523.0L670.0 522.0L672.5 520.0L675.0 517.2" stroke="#d4d4d4" stroke-width="0.55"/>
<path d="M659.0 515.0L664.7 514.8" stroke="#d4d4d4" stroke-width="0.55"/>
<path d="M659.5 518.5L664.5 518.5L665.0 520.0L663.0 522.0" stroke="#d4d4d4" stroke-width="0.55"/>
<path d="M700.4 526.9L704.9 525.0L710.9 524.0L712.7 523.2" stroke="#d4d4d4" stroke-width="0.55"/>
<path d="M700.4 518.5L701.9 522.0L700.4 526.9" stroke="#d4d4d4" stroke-width="0.55"/>
<path d="M700.4 526.9L700.0 530.9L702.9 531.9L706.9 528.9L710.9 528.9L715.9 527.9L718.9 526.9L726.9 529.9" stroke="#d4d4d4" stroke-width="0.55"/>
<path d="M693.5 531.9L699.0 532.9L699.5 538.9L697.0 541.9" stroke="#d4d4d4" stroke-width="0.55"/>
<path d="M700.0 530.9L700.9 539.9L698.0 544.9" stroke="#d4d4d4" stroke-width="0.55"/>
<path d="M714.9 524.0L716.9 527.9" stroke="#d4d4d4" stroke-width="0.55"/>
<path d="M724.9 522.0L726.9 526.9L728.9 529.4" stroke="#d4d4d4" stroke-width="0.55"/>
<path d="M726.9 529.9L734.9 529.4L737.9 531.9" stroke="#d4d4d4" stroke-width="0.55"/>
<path d="M726.9 529.9L726.4 535.9L728.4 537.9" stroke="#d4d4d4" stroke-width="0.55"/>
<path d="M718.9 526.9L719.9 531.9L718.9 536.9L720.4 539.9" stroke="#d4d4d4" stroke-width="0.55"/>
<path d="M720.4 539.9L724.9 538.9L726.4 535.9" stroke="#d4d4d4" stroke-width="0.55"/>
<path d="M731.9 515.0L734.9 518.0L740.9 524.0L736.1 529.7L734.9 529.4" stroke="#d4d4d4" stroke-width="0.55"/>
<path d="M730.9 512.2L733.9 514.5L737.9 518.5" stroke="#d4d4d4" stroke-width="0.55"/>
<path d="M737.9 531.9L736.4 535.9L736.9 541.9" stroke="#d4d4d4" stroke-width="0.55"/>
<path d="M697.0 543.0L702.5 544.0L705.0 545.5L709.0 545.0L710.0 549.0L712.0 550.5L718.0 551.5L718.5 548.0L720.5 546.5" stroke="#d4d4d4" stroke-width="0.55"/>
<path d="M696.2 558.0L708.5 559.0L712.5 559.5L715.0 558.5" stroke="#d4d4d4" stroke-width="0.55"/>
<path d="M709.5 551.5L709.5 557.0L708.5 559.0" stroke="#d4d4d4" stroke-width="0.55"/>
<path d="M718.5 548.0L719.0 552.0L720.5 553.0L723.0 552.0L724.5 549.0L725.0 547.0" stroke="#d4d4d4" stroke-width="0.55"/>
<path d="M715.0 558.5L719.0 557.0L722.5 556.5L725.0 555.0L726.5 554.0" stroke="#d4d4d4" stroke-width="0.55"/>
<path d="M708.5 559.0L708.5 566.0L707.5 571.0L706.5 573.9" stroke="#d4d4d4" stroke-width="0.55"/>
<path d="M707.5 571.0L712.0 570.5L716.0 568.0L719.5 565.5" stroke="#d4d4d4" stroke-width="0.55"/>
<path d="M715.0 558.5L719.5 565.5" stroke="#d4d4d4" stroke-width="0.55"/>
<path d="M722.5 556.5L724.5 561.0L722.5 565.5L719.5 565.5" stroke="#d4d4d4" stroke-width="0.55"/>
<path d="M722.5 565.5L723.5 569.0L723.0 572.0" stroke="#d4d4d4" stroke-width="0.55"/>
<path d="M703.7 574.9L706.5 573.9" stroke="#d4d4d4" stroke-width="0.55"/>
<path d="M717.0 575.1L718.3 574.7L719.2 575.9L718.2 577.1L717.0 576.5L717.0 575.1" stroke="#d4d4d4" stroke-width="0.55"/>
<path d="M721.8 571.0L722.8 570.6L723.4 571.6L722.6 572.4L721.8 571.8L721.8 571.0" stroke="#d4d4d4" stroke-width="0.55"/>
<path d="M720.0 537.0L722.0 543.0L721.5 546.5" stroke="#d4d4d4" stroke-width="0.55"/>
<path d="M726.5 536.5L731.9 541.0L732.9 543.0" stroke="#d4d4d4" stroke-width="0.55"/>
<path d="M725.0 551.0L729.0 550.5L733.4 549.5" stroke="#d4d4d4" stroke-width="0.55"/>
<path d="M725.5 549.0L727.0 554.0L727.5 557.0" stroke="#d4d4d4" stroke-width="0.55"/>
<path d="M722.0 531.0L723.5 536.0L724.5 538.0" stroke="#d4d4d4" stroke-width="0.55"/>
<path d="M694.0 533.5L699.0 533.0L700.0 538.0L697.0 541.0" stroke="#d4d4d4" stroke-width="0.55"/>
<path d="M700.0 528.0L702.0 533.0L705.0 534.0L704.0 539.0L702.5 544.0" stroke="#d4d4d4" stroke-width="0.55"/>
<path d="M735.9 530.0L735.9 537.0" stroke="#d4d4d4" stroke-width="0.55"/>
<path d="M584.0 523.0L586.0 526.0L590.0 527.0L590.5 530.0L590.0 533.0" stroke="#d4d4d4" stroke-width="0.55"/>
<path d="M600.0 525.0L599.5 528.0L600.0 529.0" stroke="#d4d4d4" stroke-width="0.55"/>
<path d="M604.0 528.0L604.0 532.5" stroke="#d4d4d4" stroke-width="0.55"/>
<path d="M607.4 528.0L607.7 532.0" stroke="#d4d4d4" stroke-width="0.55"/>
<path d="M575.0 534.0L579.5 535.0L583.5 538.5L587.0 539.0" stroke="#d4d4d4" stroke-width="0.55"/>
<path d="M573.0 541.0L576.0 539.0L579.0 536.5L579.5 535.0" stroke="#d4d4d4" stroke-width="0.55"/>
<path d="M588.5 549.5L588.0 555.0L587.5 559.5L589.0 561.9" stroke="#d4d4d4" stroke-width="0.55"/>
<path d="M589.0 561.9L590.0 565.9L594.0 564.9L597.0 565.9L598.0 563.9" stroke="#d4d4d4" stroke-width="0.55"/>
<path d="M597.0 565.9L598.5 561.9L602.0 561.4L603.5 563.9" stroke="#d4d4d4" stroke-width="0.55"/>
<path d="M597.0 565.9L600.0 568.9L603.5 570.9L604.0 573.9L606.4 572.9" stroke="#d4d4d4" stroke-width="0.55"/>
<path d="M589.0 561.9L588.5 568.9L587.0 574.9L586.0 583.0L585.0 590.9L584.5 598.9L585.0 604.9" stroke="#d4d4d4" stroke-width="0.55"/>
<path d="M604.5 576.9L604.0 580.9L605.0 583.9" stroke="#d4d4d4" stroke-width="0.55"/>
<path d="M700.0 455.0L700.5 460.0L699.5 461.0" stroke="#d4d4d4" stroke-width="0.55"/>
<path d="M689.0 458.0L690.0 463.0L691.0 466.0" stroke="#d4d4d4" stroke-width="0.55"/>
<path d="M699.5 461.0L702.0 462.5L705.0 462.0L708.0 463.0" stroke="#d4d4d4" stroke-width="0.55"/>
<path d="M691.0 466.0L695.0 465.5L699.5 465.0L702.0 462.5" stroke="#d4d4d4" stroke-width="0.55"/>
<path d="M712.0 454.5L713.5 459.0L712.5 462.0L708.0 463.0" stroke="#d4d4d4" stroke-width="0.55"/>
<path d="M707.0 454.0L712.0 454.5" stroke="#d4d4d4" stroke-width="0.55"/>
<path d="M712.5 449.0L718.0 450.0" stroke="#d4d4d4" stroke-width="0.55"/>
<path d="M712.0 451.5L717.5 452.5" stroke="#d4d4d4" stroke-width="0.55"/>
<path d="M713.5 459.0L718.0 458.5L722.9 459.5" stroke="#d4d4d4" stroke-width="0.55"/>
<path d="M712.5 462.0L715.0 465.0L719.0 465.0L720.9 468.0L722.9 468.5" stroke="#d4d4d4" stroke-width="0.55"/>
<path d="M712.5 466.5L715.0 465.0" stroke="#d4d4d4" stroke-width="0.55"/>
<path d="M712.5 466.5L714.0 470.5L719.0 471.5L720.9 468.5" stroke="#d4d4d4" stroke-width="0.55"/>
<path d="M705.0 465.0L709.0 464.5L712.5 466.5" stroke="#d4d4d4" stroke-width="0.55"/>
<path d="M705.0 465.0L705.0 467.5L709.0 468.5L712.5 466.5" stroke="#d4d4d4" stroke-width="0.55"/>
<path d="M705.0 467.5L707.0 471.0L709.5 474.0L711.0 476.0" stroke="#d4d4d4" stroke-width="0.55"/>
<path d="M709.0 468.5L710.0 472.0L714.0 470.5" stroke="#d4d4d4" stroke-width="0.55"/>
<path d="M710.0 472.0L712.0 475.0L716.0 474.5L719.0 471.5" stroke="#d4d4d4" stroke-width="0.55"/>
<path d="M712.0 475.0L713.0 477.0L716.5 476.5" stroke="#d4d4d4" stroke-width="0.55"/>
<path d="M690.5 468.5L692.5 470.5L692.0 472.5" stroke="#d4d4d4" stroke-width="0.55"/>
<path d="M694.0 468.5L699.5 469.0L702.5 468.0L705.0 467.5" stroke="#d4d4d4" stroke-width="0.55"/>
<path d="M729.4 484.0L734.9 483.0L739.9 482.5L741.4 481.0" stroke="#d4d4d4" stroke-width="0.55"/>
<path d="M738.9 475.0L741.4 478.0L743.9 479.5L741.4 481.0" stroke="#d4d4d4" stroke-width="0.55"/>
<path d="M741.4 478.0L744.9 477.2" stroke="#d4d4d4" stroke-width="0.55"/>
<path d="M734.9 483.0L733.9 487.5L730.9 489.5" stroke="#d4d4d4" stroke-width="0.55"/>
<path d="M741.4 481.0L740.9 485.0L743.4 490.0L743.9 493.7" stroke="#d4d4d4" stroke-width="0.55"/>
<path d="M730.9 489.5L734.9 490.4L739.9 493.9L743.2 494.5" stroke="#d4d4d4" stroke-width="0.55"/>
<path d="M727.4 491.9L730.4 490.0L730.9 489.5" stroke="#d4d4d4" stroke-width="0.55"/>
<path d="M727.6 487.0L727.9 491.9" stroke="#d4d4d4" stroke-width="0.55"/>
<path d="M713.5 492.1L713.5 506.1" stroke="#d4d4d4" stroke-width="0.55"/>
<path d="M690.5 484.5L691.0 488.0L693.5 489.0L694.0 492.9L693.0 498.9L694.5 501.9L701.0 503.9" stroke="#d4d4d4" stroke-width="0.55"/>
<path d="M675.0 501.9L686.5 508.9L701.5 503.4L713.5 508.1" stroke="#d4d4d4" stroke-width="0.55"/>
<path d="M753.9 477.0L756.9 471.2L761.9 472.0L765.4 475.0" stroke="#d4d4d4" stroke-width="0.55"/>
<path d="M755.9 478.0L760.9 479.0L765.4 481.0" stroke="#d4d4d4" stroke-width="0.55"/>
<path d="M738.9 510.9L744.9 508.9L753.9 508.9L757.9 504.9L756.9 501.9" stroke="#d4d4d4" stroke-width="0.55"/>
<path d="M752.9 500.9L754.9 502.9L757.9 504.9" stroke="#d4d4d4" stroke-width="0.55"/>
<path d="M761.9 489.0L763.9 494.9L762.9 498.9" stroke="#d4d4d4" stroke-width="0.55"/>
<path d="M695.6 448.6L696.8 444.0L696.4 440.2L697.9 436.4L701.0 432.6L704.0 429.5L707.1 426.5L710.1 423.4L712.4 422.3" stroke="#d4d4d4" stroke-width="0.55"/>
<path d="M712.4 422.3L713.2 424.9L712.4 428.0L713.5 430.3L714.3 431.4" stroke="#d4d4d4" stroke-width="0.55"/>
<path d="M712.4 422.3L714.7 421.5L717.7 422.3L720.0 423.4" stroke="#d4d4d4" stroke-width="0.55"/>
<path d="M755.0 471.0L759.0 470.0L763.0 472.5L767.0 473.5L770.0 477.0L774.0 475.0L778.0 474.0L783.0 473.5L788.0 474.0" stroke="#d4d4d4" stroke-width="0.55"/>
<path d="M755.0 471.0L756.0 476.0L760.0 474.5L765.0 479.0L770.0 482.0L771.5 483.0" stroke="#d4d4d4" stroke-width="0.55"/>
<path d="M752.5 480.0L756.0 481.0L761.0 483.0L765.0 484.0L770.0 482.0" stroke="#d4d4d4" stroke-width="0.55"/>
<path d="M765.0 484.0L762.0 488.0L763.0 494.0L769.0 493.0L773.0 490.0L775.0 486.0L779.0 483.0L780.0 481.0" stroke="#d4d4d4" stroke-width="0.55"/>
<path d="M771.5 483.0L775.0 482.0L779.5 480.5" stroke="#d4d4d4" stroke-width="0.55"/>
<path d="M774.0 475.0L772.0 479.0L777.0 478.0L781.0 476.0L785.0 475.0" stroke="#d4d4d4" stroke-width="0.55"/>
<path d="M772.0 479.0L774.0 481.0L779.0 480.0" stroke="#d4d4d4" stroke-width="0.55"/>
<path d="M762.0 488.0L761.0 494.0L764.0 498.9" stroke="#d4d4d4" stroke-width="0.55"/>
<path d="M808.9 499.9L810.9 503.9L809.9 508.9L811.9 511.9" stroke="#d4d4d4" stroke-width="0.55"/>
<path d="M814.9 505.9L816.9 508.9L818.9 509.9L820.9 513.9" stroke="#d4d4d4" stroke-width="0.55"/>
<path d="M810.9 503.9L814.9 505.9L818.9 505.4" stroke="#d4d4d4" stroke-width="0.55"/>
</g>
</svg>
<div class="t" style="left:627.00px;top:327.19px;font-size:20.8px;color:#5c5c5c;transform:scaleX(0.9547);transform-origin:left top;">Population Map</div>
</body>
</html>
